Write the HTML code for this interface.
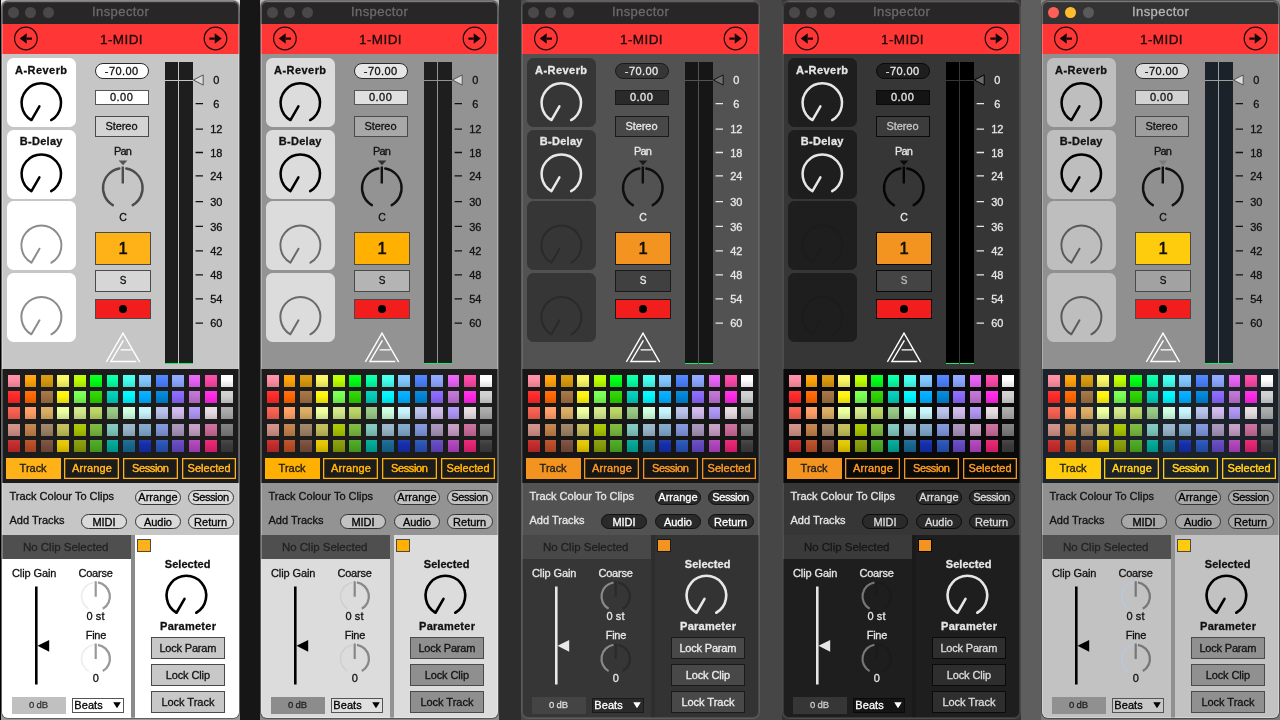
<!DOCTYPE html>
<html lang="en"><head><meta charset="utf-8"><title>Inspector</title>
<style>
html,body{margin:0;padding:0}
body{width:1280px;height:720px;overflow:hidden;background:#000;position:relative;font-family:"Liberation Sans",sans-serif}
.gap{position:absolute;top:0;height:720px}
.panel{position:absolute;top:0;width:237px;height:720px}
.edge{position:absolute;top:0;height:720px}
.win{position:absolute;left:0;top:1px;width:237px;height:716.5px;border-radius:6px;overflow:hidden;box-shadow:0 0 0 .8px rgba(0,0,0,.38);will-change:transform}
.win>*{margin-top:-1px}
.tbar{position:absolute;left:0;top:1px;width:237px;height:22.8px;z-index:1;box-shadow:inset 0 1.5px 0 #4a4848}
.light{position:absolute;z-index:2;width:10.8px;height:10.8px;border-radius:50%}
.red{position:absolute;left:0;top:23px;width:237px;height:30.8px;background:#FF3636}
.send{position:absolute;left:5px;width:69px;height:69px;border-radius:6.5px}
.t{position:absolute;width:200px;text-align:center;white-space:pre;-webkit-text-stroke:.3px}
.big{-webkit-text-stroke:.6px}
.tt{z-index:2}
.hl{position:absolute;left:0;top:1px;width:237px;height:716.5px;border-radius:6px;z-index:5}
.tb{text-shadow:0 0 .4px currentColor}
.pill{position:absolute;box-sizing:border-box;border:1px solid;border-radius:9px}
.bx{position:absolute;box-sizing:border-box;border:1px solid}
.dot{position:absolute;width:8px;height:8px;border-radius:50%;background:#000}
.meter{position:absolute;left:163px;top:62px;width:27.8px;height:302.4px}
.ov{position:absolute;left:0;top:0;pointer-events:none}
.pal{position:absolute;left:0;top:369px;width:237px;height:113.5px}
.sw{position:absolute;width:11.9px;height:12px;display:block;background-image:linear-gradient(rgba(255,255,255,.07),rgba(0,0,0,0) 40%,rgba(0,0,0,.13))}
.tab{position:absolute;top:457.8px;width:54.8px;height:21.2px;box-sizing:border-box;box-shadow:inset 0 0 0 1.3px var(--a)}
</style></head><body>
<div class="gap" style="left:0px;width:2px;background:#000"></div>
<div class="gap" style="left:239px;width:23px;background:#161616"></div>
<div class="gap" style="left:498px;width:25px;background:#2d2d2d"></div>
<div class="gap" style="left:759px;width:25px;background:#464646"></div>
<div class="gap" style="left:1020px;width:23px;background:#5e5e5e"></div>
<div class="gap" style="left:1279px;width:1px;background:#555"></div>
<div class="edge" style="left:0.7px;width:239.6px;background:linear-gradient(#e4e4e4,#9c9c9c 14px)"></div>
<div class="edge" style="left:259.8px;width:239.6px;background:linear-gradient(#b4b4b4,#8a8a8a 14px)"></div>
<div class="edge" style="left:520.7px;width:239.6px;background:linear-gradient(#4a4a4a,#464646 14px)"></div>
<div class="edge" style="left:781.5px;width:239.6px;background:linear-gradient(#383838,#333333 14px)"></div>
<div class="edge" style="left:1040.5px;width:239.6px;background:linear-gradient(#858585,#7a7a7a 14px)"></div>
<div class="panel" style="left:2px;color:#111111">
<div class="win" style="background:#c6c6c6;box-shadow:0 0 0 .9px rgba(0,0,0,.38)">
<div class="tbar" style="background:#282626"></div>
<div class="light" style="left:5.9px;top:6.9px;background:#4a4848"></div>
<div class="light" style="left:23.4px;top:6.9px;background:#4a4848"></div>
<div class="light" style="left:40.9px;top:6.9px;background:#4a4848"></div>
<div class="t tt" style="left:18.61px;top:4.45px;font-size:13px;line-height:16px;letter-spacing:0.43px;color:#6c6a6a;">Inspector</div>
<div class="red"></div>
<div class="t " style="left:19.5px;top:32.17px;font-size:13.5px;line-height:16px;letter-spacing:0.4px;color:#1a0808;">1-MIDI</div>
<div class="send" style="top:58.2px;background:#ffffff"></div>
<div class="t " style="left:-60.68px;top:63.74px;font-size:11px;line-height:13px;letter-spacing:0.44px;font-weight:bold;">A-Reverb</div>
<div class="send" style="top:130.4px;background:#ffffff"></div>
<div class="t " style="left:-60.75px;top:134.64px;font-size:11px;line-height:13px;letter-spacing:0.3px;font-weight:bold;">B-Delay</div>
<div class="send" style="top:201.2px;background:#ffffff"></div>
<div class="send" style="top:272.8px;background:#ffffff"></div>
<div class="pill" style="left:93px;top:63px;width:54px;height:16px;background:#ffffff;border-color:#2a2a2a"></div>
<div class="t " style="left:19.72px;top:65.14px;font-size:11px;line-height:13px;letter-spacing:0.44px;">-70.00</div>
<div class="bx" style="left:93px;top:90px;width:54px;height:15px;background:#ffffff;border-color:#555555"></div>
<div class="t " style="left:19.62px;top:91.04px;font-size:11px;line-height:13px;letter-spacing:0.45px;">0.00</div>
<div class="bx" style="left:93px;top:116px;width:54px;height:21px;background:#d4d4d4;border-color:#4a4a4a"></div>
<div class="t " style="left:19.46px;top:120.44px;font-size:11px;line-height:13px;letter-spacing:-0.08px;color:#111111;">Stereo</div>
<div class="t " style="left:20.61px;top:144.54px;font-size:11px;line-height:13px;letter-spacing:-0.79px;">Pan</div>
<div class="t " style="left:21px;top:211.31px;font-size:10.5px;line-height:13px;">C</div>
<div class="bx" style="left:93.2px;top:232.2px;width:55.8px;height:32.6px;background:#FFB118;border-color:#4a4a4a"></div>
<div class="t big" style="left:21px;top:237.73px;font-size:16.5px;line-height:20px;color:#111;">1</div>
<div class="bx" style="left:93.2px;top:270.2px;width:55.8px;height:21.4px;background:#d6d6d6;border-color:#4a4a4a"></div>
<div class="t " style="left:21px;top:275.38px;font-size:10px;line-height:12px;color:#111111;">S</div>
<div class="bx" style="left:93.2px;top:298.7px;width:55.8px;height:20.8px;background:#F21D1D;border-color:#4a4a4a"></div>
<div class="dot" style="left:117px;top:305px"></div>
<div class="meter" style="background:#1e1e1e"></div>
<div style="position:absolute;left:176px;top:62px;width:1.1px;height:302.4px;background:#c6c6c6"></div>
<div style="position:absolute;left:163px;top:79.5px;width:28px;height:1.1px;background:#c6c6c6"></div>
<div style="position:absolute;left:163px;top:362.8px;width:27.8px;height:1.6px;background:#14f06a"></div>
<div style="position:absolute;left:176px;top:362.8px;width:1.1px;height:1.6px;background:#c6c6c6"></div>
<div class="t " style="left:114.3px;top:74.29px;font-size:11px;line-height:13px;">0</div>
<div class="t " style="left:114.3px;top:97.84px;font-size:11px;line-height:13px;">6</div>
<div class="t " style="left:114.3px;top:123.49px;font-size:11px;line-height:13px;">12</div>
<div class="t " style="left:114.3px;top:146.79px;font-size:11px;line-height:13px;">18</div>
<div class="t " style="left:114.3px;top:170.09px;font-size:11px;line-height:13px;">24</div>
<div class="t " style="left:114.3px;top:195.89px;font-size:11px;line-height:13px;">30</div>
<div class="t " style="left:114.3px;top:220.59px;font-size:11px;line-height:13px;">36</div>
<div class="t " style="left:114.3px;top:245.09px;font-size:11px;line-height:13px;">42</div>
<div class="t " style="left:114.3px;top:269.09px;font-size:11px;line-height:13px;">48</div>
<div class="t " style="left:114.3px;top:293.09px;font-size:11px;line-height:13px;">54</div>
<div class="t " style="left:114.3px;top:317.39px;font-size:11px;line-height:13px;">60</div>
<svg class="ov" width="237" height="720" viewBox="0 0 237 720">
<path d="M29.45 120.06A19.7 19.7 0 1 1 49.15 120.06M37.4 106.29L29.45 120.06" fill="none" stroke="#000000" stroke-width="2.5" stroke-linecap="round"/>
<path d="M29.45 191.16A19.7 19.7 0 1 1 49.15 191.16M37.4 177.39L29.45 191.16" fill="none" stroke="#000000" stroke-width="2.5" stroke-linecap="round"/>
<path d="M29.4 262.72A20 20 0 1 1 49.4 262.72M37.5 248.69L29.4 262.72" fill="none" stroke="#8c8c8c" stroke-width="2.0" stroke-linecap="round"/>
<path d="M29.4 334.32A20 20 0 1 1 49.4 334.32M37.5 320.29L29.4 334.32" fill="none" stroke="#8c8c8c" stroke-width="2.0" stroke-linecap="round"/>
<path d="M193.6 103.55h7.4M193.6 129.2h7.4M193.6 152.5h7.4M193.6 175.8h7.4M193.6 201.6h7.4M193.6 226.3h7.4M193.6 250.8h7.4M193.6 274.8h7.4M193.6 298.8h7.4M193.6 323.1h7.4" stroke="#111111" stroke-width="1.3"/>
<path d="M110.9 205.15A19.8 19.8 0 0 1 117.36 168.5M124.24 168.5A19.8 19.8 0 0 1 130.7 205.15" fill="none" stroke="#4c4c4c" stroke-width="2.4" stroke-linecap="round"/>
<path d="M120.8 166.5L120.8 183.5" stroke="#4c4c4c" stroke-width="2.4" stroke-linecap="butt"/>
<path d="M116.6 160.6h8.8l-4.4 4.6z" fill="#555555"/>
<path d="M191.4 80L201.2 74.9V85.1z" fill="#dcdcdc" stroke="#555555" stroke-width="1"/>
<path d="M104.4 361.9L121 333.2L137.7 362.2M121.4 340.3L108.9 361.5H134.3M118.6 349.9H129.5" fill="none" stroke="#ffffff" stroke-width="1.4" stroke-linejoin="miter"/>
<circle cx="23.9" cy="38.5" r="11.3" fill="none" stroke="#1a0a0a" stroke-width="1.2"/>
<path d="M17.7 38.5L24.7 33.2V43.8z" fill="#140808"/>
<path d="M24.7 38.6H30" stroke="#140808" stroke-width="2.3"/>
<circle cx="213.5" cy="38.5" r="11.3" fill="none" stroke="#1a0a0a" stroke-width="1.2"/>
<path d="M219.7 38.5L212.7 33.2V43.8z" fill="#140808"/>
<path d="M212.7 38.6H207.4" stroke="#140808" stroke-width="2.3"/>
</svg>
<div class="pal" style="background:#1c1c1c"></div>
<i class="sw" style="left:6.2px;top:374.5px;background-color:#ff8da2"></i>
<i class="sw" style="left:22.6px;top:374.5px;background-color:#ffa20b"></i>
<i class="sw" style="left:39px;top:374.5px;background-color:#d7990d"></i>
<i class="sw" style="left:55.4px;top:374.5px;background-color:#faf764"></i>
<i class="sw" style="left:71.8px;top:374.5px;background-color:#bcff00"></i>
<i class="sw" style="left:88.2px;top:374.5px;background-color:#00ff16"></i>
<i class="sw" style="left:104.6px;top:374.5px;background-color:#06ffa5"></i>
<i class="sw" style="left:121px;top:374.5px;background-color:#43ffee"></i>
<i class="sw" style="left:137.4px;top:374.5px;background-color:#81c7ff"></i>
<i class="sw" style="left:153.8px;top:374.5px;background-color:#4b80fa"></i>
<i class="sw" style="left:170.2px;top:374.5px;background-color:#8da6ff"></i>
<i class="sw" style="left:186.6px;top:374.5px;background-color:#e662f4"></i>
<i class="sw" style="left:203px;top:374.5px;background-color:#fa47a5"></i>
<i class="sw" style="left:219.4px;top:374.5px;background-color:#ffffff"></i>
<i class="sw" style="left:6.2px;top:390.9px;background-color:#ff2929"></i>
<i class="sw" style="left:22.6px;top:390.9px;background-color:#ff6600"></i>
<i class="sw" style="left:39px;top:390.9px;background-color:#a07041"></i>
<i class="sw" style="left:55.4px;top:390.9px;background-color:#fff40e"></i>
<i class="sw" style="left:71.8px;top:390.9px;background-color:#78ff51"></i>
<i class="sw" style="left:88.2px;top:390.9px;background-color:#2dd100"></i>
<i class="sw" style="left:104.6px;top:390.9px;background-color:#00ccb8"></i>
<i class="sw" style="left:121px;top:390.9px;background-color:#00f6ff"></i>
<i class="sw" style="left:137.4px;top:390.9px;background-color:#00acff"></i>
<i class="sw" style="left:153.8px;top:390.9px;background-color:#0084d5"></i>
<i class="sw" style="left:170.2px;top:390.9px;background-color:#8967fa"></i>
<i class="sw" style="left:186.6px;top:390.9px;background-color:#be71d1"></i>
<i class="sw" style="left:203px;top:390.9px;background-color:#ff28e5"></i>
<i class="sw" style="left:219.4px;top:390.9px;background-color:#d0d0d0"></i>
<i class="sw" style="left:6.2px;top:407.3px;background-color:#f55f4f"></i>
<i class="sw" style="left:22.6px;top:407.3px;background-color:#ff9e65"></i>
<i class="sw" style="left:39px;top:407.3px;background-color:#daac63"></i>
<i class="sw" style="left:55.4px;top:407.3px;background-color:#ecff9f"></i>
<i class="sw" style="left:71.8px;top:407.3px;background-color:#d1e78a"></i>
<i class="sw" style="left:88.2px;top:407.3px;background-color:#b9d464"></i>
<i class="sw" style="left:104.6px;top:407.3px;background-color:#96c885"></i>
<i class="sw" style="left:121px;top:407.3px;background-color:#ceffde"></i>
<i class="sw" style="left:137.4px;top:407.3px;background-color:#c7f3fc"></i>
<i class="sw" style="left:153.8px;top:407.3px;background-color:#b7c1ea"></i>
<i class="sw" style="left:170.2px;top:407.3px;background-color:#cfb9eb"></i>
<i class="sw" style="left:186.6px;top:407.3px;background-color:#af95f3"></i>
<i class="sw" style="left:203px;top:407.3px;background-color:#e6dbe1"></i>
<i class="sw" style="left:219.4px;top:407.3px;background-color:#a9a9a9"></i>
<i class="sw" style="left:6.2px;top:423.7px;background-color:#ce8f86"></i>
<i class="sw" style="left:22.6px;top:423.7px;background-color:#c0804a"></i>
<i class="sw" style="left:39px;top:423.7px;background-color:#9d8264"></i>
<i class="sw" style="left:55.4px;top:423.7px;background-color:#c2bc59"></i>
<i class="sw" style="left:71.8px;top:423.7px;background-color:#a7c400"></i>
<i class="sw" style="left:88.2px;top:423.7px;background-color:#78b63d"></i>
<i class="sw" style="left:104.6px;top:423.7px;background-color:#7fc6bc"></i>
<i class="sw" style="left:121px;top:423.7px;background-color:#97b4c9"></i>
<i class="sw" style="left:137.4px;top:423.7px;background-color:#7fa6ca"></i>
<i class="sw" style="left:153.8px;top:423.7px;background-color:#7f93d8"></i>
<i class="sw" style="left:170.2px;top:423.7px;background-color:#a793ba"></i>
<i class="sw" style="left:186.6px;top:423.7px;background-color:#c39cc2"></i>
<i class="sw" style="left:203px;top:423.7px;background-color:#c76b98"></i>
<i class="sw" style="left:219.4px;top:423.7px;background-color:#7b7b7b"></i>
<i class="sw" style="left:6.2px;top:440.1px;background-color:#c22b2b"></i>
<i class="sw" style="left:22.6px;top:440.1px;background-color:#b74c25"></i>
<i class="sw" style="left:39px;top:440.1px;background-color:#784d3c"></i>
<i class="sw" style="left:55.4px;top:440.1px;background-color:#e4c600"></i>
<i class="sw" style="left:71.8px;top:440.1px;background-color:#859a09"></i>
<i class="sw" style="left:88.2px;top:440.1px;background-color:#4aa721"></i>
<i class="sw" style="left:104.6px;top:440.1px;background-color:#00a695"></i>
<i class="sw" style="left:121px;top:440.1px;background-color:#18668f"></i>
<i class="sw" style="left:137.4px;top:440.1px;background-color:#142eab"></i>
<i class="sw" style="left:153.8px;top:440.1px;background-color:#2852b4"></i>
<i class="sw" style="left:170.2px;top:440.1px;background-color:#6347bf"></i>
<i class="sw" style="left:186.6px;top:440.1px;background-color:#ae43ba"></i>
<i class="sw" style="left:203px;top:440.1px;background-color:#e32270"></i>
<i class="sw" style="left:219.4px;top:440.1px;background-color:#3c3c3c"></i>
<div class="tab" style="left:3.8px;background:#FFB118;border-color:#FFB118"></div>
<div class="t " style="left:-68.91px;top:461.54px;font-size:11px;line-height:13px;letter-spacing:-0.02px;color:#1a1a1a;">Track</div>
<div class="tab" style="left:62.4px;border-color:#FFB118;--a:#FFB118"></div>
<div class="t tb" style="left:-10.03px;top:461.54px;font-size:11px;line-height:13px;letter-spacing:0.14px;color:#FFB118;">Arrange</div>
<div class="tab" style="left:121px;border-color:#FFB118;--a:#FFB118"></div>
<div class="t tb" style="left:48.32px;top:461.54px;font-size:11px;line-height:13px;letter-spacing:-0.36px;color:#FFB118;">Session</div>
<div class="tab" style="left:179.6px;border-color:#FFB118;--a:#FFB118"></div>
<div class="t tb" style="left:107.11px;top:461.54px;font-size:11px;line-height:13px;letter-spacing:0.03px;color:#FFB118;">Selected</div>
<div class="t " style="left:-40.25px;top:489.94px;font-size:11px;line-height:13px;letter-spacing:0px;">Track Colour To Clips</div>
<div class="t " style="left:-65px;top:514.34px;font-size:11px;line-height:13px;letter-spacing:0px;">Add Tracks</div>
<div class="pill" style="left:133px;top:489.5px;width:46px;height:15px;background:#dadada;border-color:#333333"></div>
<div class="t " style="left:56.01px;top:491.04px;font-size:11px;line-height:13px;letter-spacing:0.03px;color:#000000;">Arrange</div>
<div class="pill" style="left:185.6px;top:489.5px;width:46px;height:15px;background:#dadada;border-color:#333333"></div>
<div class="t " style="left:108.41px;top:491.04px;font-size:11px;line-height:13px;letter-spacing:-0.39px;color:#000000;">Session</div>
<div class="pill" style="left:79px;top:514px;width:46px;height:15px;background:#dadada;border-color:#333333"></div>
<div class="t " style="left:1.96px;top:515.54px;font-size:11px;line-height:13px;letter-spacing:-0.07px;color:#000000;">MIDI</div>
<div class="pill" style="left:133px;top:514px;width:46px;height:15px;background:#dadada;border-color:#333333"></div>
<div class="t " style="left:55.98px;top:515.54px;font-size:11px;line-height:13px;letter-spacing:-0.03px;color:#000000;">Audio</div>
<div class="pill" style="left:185.6px;top:514px;width:46px;height:15px;background:#dadada;border-color:#333333"></div>
<div class="t " style="left:108.6px;top:515.54px;font-size:11px;line-height:13px;letter-spacing:0px;color:#000000;">Return</div>
<div style="position:absolute;left:0;top:535px;width:129px;height:24px;background:#4f4f4f"></div>
<div class="t " style="left:-36.31px;top:540.47px;font-size:11.5px;line-height:14px;letter-spacing:-0.01px;color:#222222;">No Clip Selected</div>
<div style="position:absolute;left:0;top:559px;width:129px;height:159px;background:#ffffff;border-bottom-left-radius:6px"></div>
<div style="position:absolute;left:129px;top:535px;width:3.6px;height:183px;background:#8a8a8a"></div>
<div style="position:absolute;left:132.6px;top:535px;width:104.4px;height:183px;background:#ffffff;border-bottom-right-radius:6px"></div>
<div class="t " style="left:-67.85px;top:567.14px;font-size:11px;line-height:13px;letter-spacing:-0.09px;">Clip Gain</div>
<div class="t " style="left:-6.4px;top:567.14px;font-size:11px;line-height:13px;letter-spacing:-0.19px;">Coarse</div>
<div class="t " style="left:-6.45px;top:610.14px;font-size:11px;line-height:13px;letter-spacing:0.09px;">0 st</div>
<div class="t " style="left:-6.15px;top:628.94px;font-size:11px;line-height:13px;letter-spacing:-0.3px;">Fine</div>
<div class="t " style="left:-6.2px;top:672.34px;font-size:11px;line-height:13px;">0</div>
<div style="position:absolute;left:10px;top:696.8px;width:53.5px;height:17px;background:#c0c0c0"></div>
<div class="t " style="left:-63.59px;top:699.36px;font-size:9.5px;line-height:11px;letter-spacing:-0.18px;color:#333333;">0 dB</div>
<div class="bx" style="left:69.5px;top:698.2px;width:52px;height:14.6px;background:#ffffff;border-color:#555555"></div>
<div class="t " style="left:-13.45px;top:699.04px;font-size:11px;line-height:13px;letter-spacing:0.09px;color:#000000;">Beats</div>
<div class="bx" style="left:135.2px;top:538.8px;width:13.8px;height:13.6px;background:#FFB118;border-color:#4a4a4a"></div>
<div class="t " style="left:85.63px;top:557.54px;font-size:11px;line-height:13px;letter-spacing:0.06px;font-weight:bold;">Selected</div>
<div class="t " style="left:86.13px;top:619.74px;font-size:11px;line-height:13px;letter-spacing:0.26px;font-weight:bold;">Parameter</div>
<div class="bx" style="left:149px;top:637px;width:74px;height:21.8px;background:#c8c8c8;border-color:#4a4a4a"></div>
<div class="t " style="left:85.81px;top:641.84px;font-size:11px;line-height:13px;letter-spacing:-0.19px;color:#111111;">Lock Param</div>
<div class="bx" style="left:149px;top:664px;width:74px;height:21.8px;background:#c8c8c8;border-color:#4a4a4a"></div>
<div class="t " style="left:85.85px;top:668.84px;font-size:11px;line-height:13px;letter-spacing:-0.11px;color:#111111;">Lock Clip</div>
<div class="bx" style="left:149px;top:691px;width:74px;height:21.8px;background:#c8c8c8;border-color:#4a4a4a"></div>
<div class="t " style="left:85.89px;top:695.84px;font-size:11px;line-height:13px;letter-spacing:-0.02px;color:#111111;">Lock Track</div>
<svg class="ov" width="237" height="720" viewBox="0 0 237 720">
<path d="M174.5 612.75A19.8 19.8 0 1 1 194.3 612.75M182.5 598.89L174.5 612.75" fill="none" stroke="#000000" stroke-width="2.6" stroke-linecap="round"/>
<path d="M35.5 645.8L47.2 640V651.7z" fill="#000000"/>
<path d="M111.2 702.3h7.6l-3.8 6z" fill="#000000"/>
<path d="M86.6 608.8A14.2 14.2 0 0 1 91.48 582.47" fill="none" stroke="#ececec" stroke-width="1.6"/>
<path d="M95.92 582.47A14.2 14.2 0 0 1 100.8 608.8" fill="none" stroke="#999999" stroke-width="2.3"/>
<path d="M93.7 581.2V596.8" stroke="#999999" stroke-width="2.2"/>
<path d="M86.6 671.1A14.2 14.2 0 0 1 91.48 644.77" fill="none" stroke="#ececec" stroke-width="1.6"/>
<path d="M95.92 644.77A14.2 14.2 0 0 1 100.8 671.1" fill="none" stroke="#999999" stroke-width="2.3"/>
<path d="M93.7 643.5V659.1" stroke="#999999" stroke-width="2.2"/>
<path d="M34.3 586.5V684.6" stroke="#000000" stroke-width="2.6"/>
</svg>
<div class="hl" style="box-shadow:inset 0 0 0 1px rgba(255,255,255,0.28)"></div>
</div>
</div>
<div class="panel" style="left:261.1px;color:#111111">
<div class="win" style="background:#939393;box-shadow:0 0 0 .9px rgba(0,0,0,.38)">
<div class="tbar" style="background:#282626"></div>
<div class="light" style="left:5.9px;top:6.9px;background:#4a4848"></div>
<div class="light" style="left:23.4px;top:6.9px;background:#4a4848"></div>
<div class="light" style="left:40.9px;top:6.9px;background:#4a4848"></div>
<div class="t tt" style="left:18.61px;top:4.45px;font-size:13px;line-height:16px;letter-spacing:0.43px;color:#6c6a6a;">Inspector</div>
<div class="red"></div>
<div class="t " style="left:19.5px;top:32.17px;font-size:13.5px;line-height:16px;letter-spacing:0.4px;color:#1a0808;">1-MIDI</div>
<div class="send" style="top:58.2px;background:#dcdcdc"></div>
<div class="t " style="left:-60.68px;top:63.74px;font-size:11px;line-height:13px;letter-spacing:0.44px;font-weight:bold;">A-Reverb</div>
<div class="send" style="top:130.4px;background:#dcdcdc"></div>
<div class="t " style="left:-60.75px;top:134.64px;font-size:11px;line-height:13px;letter-spacing:0.3px;font-weight:bold;">B-Delay</div>
<div class="send" style="top:201.2px;background:#dcdcdc"></div>
<div class="send" style="top:272.8px;background:#dcdcdc"></div>
<div class="pill" style="left:93px;top:63px;width:54px;height:16px;background:#e6e6e6;border-color:#2a2a2a"></div>
<div class="t " style="left:19.72px;top:65.14px;font-size:11px;line-height:13px;letter-spacing:0.44px;">-70.00</div>
<div class="bx" style="left:93px;top:90px;width:54px;height:15px;background:#e0e0e0;border-color:#555555"></div>
<div class="t " style="left:19.62px;top:91.04px;font-size:11px;line-height:13px;letter-spacing:0.45px;">0.00</div>
<div class="bx" style="left:93px;top:116px;width:54px;height:21px;background:#a8a8a8;border-color:#4a4a4a"></div>
<div class="t " style="left:19.46px;top:120.44px;font-size:11px;line-height:13px;letter-spacing:-0.08px;color:#111111;">Stereo</div>
<div class="t " style="left:20.61px;top:144.54px;font-size:11px;line-height:13px;letter-spacing:-0.79px;">Pan</div>
<div class="t " style="left:21px;top:211.31px;font-size:10.5px;line-height:13px;">C</div>
<div class="bx" style="left:93.2px;top:232.2px;width:55.8px;height:32.6px;background:#FFB000;border-color:#4a4a4a"></div>
<div class="t big" style="left:21px;top:237.73px;font-size:16.5px;line-height:20px;color:#111;">1</div>
<div class="bx" style="left:93.2px;top:270.2px;width:55.8px;height:21.4px;background:#b4b4b4;border-color:#4a4a4a"></div>
<div class="t " style="left:21px;top:275.38px;font-size:10px;line-height:12px;color:#111111;">S</div>
<div class="bx" style="left:93.2px;top:298.7px;width:55.8px;height:20.8px;background:#F21D1D;border-color:#4a4a4a"></div>
<div class="dot" style="left:117px;top:305px"></div>
<div class="meter" style="background:#1e1e1e"></div>
<div style="position:absolute;left:176px;top:62px;width:1.1px;height:302.4px;background:#939393"></div>
<div style="position:absolute;left:163px;top:79.5px;width:28px;height:1.1px;background:#939393"></div>
<div style="position:absolute;left:163px;top:362.8px;width:27.8px;height:1.6px;background:#14f06a"></div>
<div style="position:absolute;left:176px;top:362.8px;width:1.1px;height:1.6px;background:#939393"></div>
<div class="t " style="left:114.3px;top:74.29px;font-size:11px;line-height:13px;">0</div>
<div class="t " style="left:114.3px;top:97.84px;font-size:11px;line-height:13px;">6</div>
<div class="t " style="left:114.3px;top:123.49px;font-size:11px;line-height:13px;">12</div>
<div class="t " style="left:114.3px;top:146.79px;font-size:11px;line-height:13px;">18</div>
<div class="t " style="left:114.3px;top:170.09px;font-size:11px;line-height:13px;">24</div>
<div class="t " style="left:114.3px;top:195.89px;font-size:11px;line-height:13px;">30</div>
<div class="t " style="left:114.3px;top:220.59px;font-size:11px;line-height:13px;">36</div>
<div class="t " style="left:114.3px;top:245.09px;font-size:11px;line-height:13px;">42</div>
<div class="t " style="left:114.3px;top:269.09px;font-size:11px;line-height:13px;">48</div>
<div class="t " style="left:114.3px;top:293.09px;font-size:11px;line-height:13px;">54</div>
<div class="t " style="left:114.3px;top:317.39px;font-size:11px;line-height:13px;">60</div>
<svg class="ov" width="237" height="720" viewBox="0 0 237 720">
<path d="M29.45 120.06A19.7 19.7 0 1 1 49.15 120.06M37.4 106.29L29.45 120.06" fill="none" stroke="#000000" stroke-width="2.5" stroke-linecap="round"/>
<path d="M29.45 191.16A19.7 19.7 0 1 1 49.15 191.16M37.4 177.39L29.45 191.16" fill="none" stroke="#000000" stroke-width="2.5" stroke-linecap="round"/>
<path d="M29.4 262.72A20 20 0 1 1 49.4 262.72M37.5 248.69L29.4 262.72" fill="none" stroke="#6a6a6a" stroke-width="2.0" stroke-linecap="round"/>
<path d="M29.4 334.32A20 20 0 1 1 49.4 334.32M37.5 320.29L29.4 334.32" fill="none" stroke="#6a6a6a" stroke-width="2.0" stroke-linecap="round"/>
<path d="M193.6 103.55h7.4M193.6 129.2h7.4M193.6 152.5h7.4M193.6 175.8h7.4M193.6 201.6h7.4M193.6 226.3h7.4M193.6 250.8h7.4M193.6 274.8h7.4M193.6 298.8h7.4M193.6 323.1h7.4" stroke="#111111" stroke-width="1.3"/>
<path d="M110.9 205.15A19.8 19.8 0 0 1 117.36 168.5M124.24 168.5A19.8 19.8 0 0 1 130.7 205.15" fill="none" stroke="#111111" stroke-width="2.4" stroke-linecap="round"/>
<path d="M120.8 166.5L120.8 183.5" stroke="#111111" stroke-width="2.4" stroke-linecap="butt"/>
<path d="M116.6 160.6h8.8l-4.4 4.6z" fill="#333333"/>
<path d="M191.4 80L201.2 74.9V85.1z" fill="#dcdcdc" stroke="#555555" stroke-width="1"/>
<path d="M104.4 361.9L121 333.2L137.7 362.2M121.4 340.3L108.9 361.5H134.3M118.6 349.9H129.5" fill="none" stroke="#ffffff" stroke-width="1.4" stroke-linejoin="miter"/>
<circle cx="23.9" cy="38.5" r="11.3" fill="none" stroke="#1a0a0a" stroke-width="1.2"/>
<path d="M17.7 38.5L24.7 33.2V43.8z" fill="#140808"/>
<path d="M24.7 38.6H30" stroke="#140808" stroke-width="2.3"/>
<circle cx="213.5" cy="38.5" r="11.3" fill="none" stroke="#1a0a0a" stroke-width="1.2"/>
<path d="M219.7 38.5L212.7 33.2V43.8z" fill="#140808"/>
<path d="M212.7 38.6H207.4" stroke="#140808" stroke-width="2.3"/>
</svg>
<div class="pal" style="background:#1c1c1c"></div>
<i class="sw" style="left:6.2px;top:374.5px;background-color:#ff8da2"></i>
<i class="sw" style="left:22.6px;top:374.5px;background-color:#ffa20b"></i>
<i class="sw" style="left:39px;top:374.5px;background-color:#d7990d"></i>
<i class="sw" style="left:55.4px;top:374.5px;background-color:#faf764"></i>
<i class="sw" style="left:71.8px;top:374.5px;background-color:#bcff00"></i>
<i class="sw" style="left:88.2px;top:374.5px;background-color:#00ff16"></i>
<i class="sw" style="left:104.6px;top:374.5px;background-color:#06ffa5"></i>
<i class="sw" style="left:121px;top:374.5px;background-color:#43ffee"></i>
<i class="sw" style="left:137.4px;top:374.5px;background-color:#81c7ff"></i>
<i class="sw" style="left:153.8px;top:374.5px;background-color:#4b80fa"></i>
<i class="sw" style="left:170.2px;top:374.5px;background-color:#8da6ff"></i>
<i class="sw" style="left:186.6px;top:374.5px;background-color:#e662f4"></i>
<i class="sw" style="left:203px;top:374.5px;background-color:#fa47a5"></i>
<i class="sw" style="left:219.4px;top:374.5px;background-color:#ffffff"></i>
<i class="sw" style="left:6.2px;top:390.9px;background-color:#ff2929"></i>
<i class="sw" style="left:22.6px;top:390.9px;background-color:#ff6600"></i>
<i class="sw" style="left:39px;top:390.9px;background-color:#a07041"></i>
<i class="sw" style="left:55.4px;top:390.9px;background-color:#fff40e"></i>
<i class="sw" style="left:71.8px;top:390.9px;background-color:#78ff51"></i>
<i class="sw" style="left:88.2px;top:390.9px;background-color:#2dd100"></i>
<i class="sw" style="left:104.6px;top:390.9px;background-color:#00ccb8"></i>
<i class="sw" style="left:121px;top:390.9px;background-color:#00f6ff"></i>
<i class="sw" style="left:137.4px;top:390.9px;background-color:#00acff"></i>
<i class="sw" style="left:153.8px;top:390.9px;background-color:#0084d5"></i>
<i class="sw" style="left:170.2px;top:390.9px;background-color:#8967fa"></i>
<i class="sw" style="left:186.6px;top:390.9px;background-color:#be71d1"></i>
<i class="sw" style="left:203px;top:390.9px;background-color:#ff28e5"></i>
<i class="sw" style="left:219.4px;top:390.9px;background-color:#d0d0d0"></i>
<i class="sw" style="left:6.2px;top:407.3px;background-color:#f55f4f"></i>
<i class="sw" style="left:22.6px;top:407.3px;background-color:#ff9e65"></i>
<i class="sw" style="left:39px;top:407.3px;background-color:#daac63"></i>
<i class="sw" style="left:55.4px;top:407.3px;background-color:#ecff9f"></i>
<i class="sw" style="left:71.8px;top:407.3px;background-color:#d1e78a"></i>
<i class="sw" style="left:88.2px;top:407.3px;background-color:#b9d464"></i>
<i class="sw" style="left:104.6px;top:407.3px;background-color:#96c885"></i>
<i class="sw" style="left:121px;top:407.3px;background-color:#ceffde"></i>
<i class="sw" style="left:137.4px;top:407.3px;background-color:#c7f3fc"></i>
<i class="sw" style="left:153.8px;top:407.3px;background-color:#b7c1ea"></i>
<i class="sw" style="left:170.2px;top:407.3px;background-color:#cfb9eb"></i>
<i class="sw" style="left:186.6px;top:407.3px;background-color:#af95f3"></i>
<i class="sw" style="left:203px;top:407.3px;background-color:#e6dbe1"></i>
<i class="sw" style="left:219.4px;top:407.3px;background-color:#a9a9a9"></i>
<i class="sw" style="left:6.2px;top:423.7px;background-color:#ce8f86"></i>
<i class="sw" style="left:22.6px;top:423.7px;background-color:#c0804a"></i>
<i class="sw" style="left:39px;top:423.7px;background-color:#9d8264"></i>
<i class="sw" style="left:55.4px;top:423.7px;background-color:#c2bc59"></i>
<i class="sw" style="left:71.8px;top:423.7px;background-color:#a7c400"></i>
<i class="sw" style="left:88.2px;top:423.7px;background-color:#78b63d"></i>
<i class="sw" style="left:104.6px;top:423.7px;background-color:#7fc6bc"></i>
<i class="sw" style="left:121px;top:423.7px;background-color:#97b4c9"></i>
<i class="sw" style="left:137.4px;top:423.7px;background-color:#7fa6ca"></i>
<i class="sw" style="left:153.8px;top:423.7px;background-color:#7f93d8"></i>
<i class="sw" style="left:170.2px;top:423.7px;background-color:#a793ba"></i>
<i class="sw" style="left:186.6px;top:423.7px;background-color:#c39cc2"></i>
<i class="sw" style="left:203px;top:423.7px;background-color:#c76b98"></i>
<i class="sw" style="left:219.4px;top:423.7px;background-color:#7b7b7b"></i>
<i class="sw" style="left:6.2px;top:440.1px;background-color:#c22b2b"></i>
<i class="sw" style="left:22.6px;top:440.1px;background-color:#b74c25"></i>
<i class="sw" style="left:39px;top:440.1px;background-color:#784d3c"></i>
<i class="sw" style="left:55.4px;top:440.1px;background-color:#e4c600"></i>
<i class="sw" style="left:71.8px;top:440.1px;background-color:#859a09"></i>
<i class="sw" style="left:88.2px;top:440.1px;background-color:#4aa721"></i>
<i class="sw" style="left:104.6px;top:440.1px;background-color:#00a695"></i>
<i class="sw" style="left:121px;top:440.1px;background-color:#18668f"></i>
<i class="sw" style="left:137.4px;top:440.1px;background-color:#142eab"></i>
<i class="sw" style="left:153.8px;top:440.1px;background-color:#2852b4"></i>
<i class="sw" style="left:170.2px;top:440.1px;background-color:#6347bf"></i>
<i class="sw" style="left:186.6px;top:440.1px;background-color:#ae43ba"></i>
<i class="sw" style="left:203px;top:440.1px;background-color:#e32270"></i>
<i class="sw" style="left:219.4px;top:440.1px;background-color:#3c3c3c"></i>
<div class="tab" style="left:3.8px;background:#FFB000;border-color:#FFB000"></div>
<div class="t " style="left:-68.91px;top:461.54px;font-size:11px;line-height:13px;letter-spacing:-0.02px;color:#1a1a1a;">Track</div>
<div class="tab" style="left:62.4px;border-color:#FFB000;--a:#FFB000"></div>
<div class="t tb" style="left:-10.03px;top:461.54px;font-size:11px;line-height:13px;letter-spacing:0.14px;color:#FFB000;">Arrange</div>
<div class="tab" style="left:121px;border-color:#FFB000;--a:#FFB000"></div>
<div class="t tb" style="left:48.32px;top:461.54px;font-size:11px;line-height:13px;letter-spacing:-0.36px;color:#FFB000;">Session</div>
<div class="tab" style="left:179.6px;border-color:#FFB000;--a:#FFB000"></div>
<div class="t tb" style="left:107.11px;top:461.54px;font-size:11px;line-height:13px;letter-spacing:0.03px;color:#FFB000;">Selected</div>
<div class="t " style="left:-40.25px;top:489.94px;font-size:11px;line-height:13px;letter-spacing:0px;">Track Colour To Clips</div>
<div class="t " style="left:-65px;top:514.34px;font-size:11px;line-height:13px;letter-spacing:0px;">Add Tracks</div>
<div class="pill" style="left:133px;top:489.5px;width:46px;height:15px;background:#c2c2c2;border-color:#333333"></div>
<div class="t " style="left:56.01px;top:491.04px;font-size:11px;line-height:13px;letter-spacing:0.03px;color:#000000;">Arrange</div>
<div class="pill" style="left:185.6px;top:489.5px;width:46px;height:15px;background:#c2c2c2;border-color:#333333"></div>
<div class="t " style="left:108.41px;top:491.04px;font-size:11px;line-height:13px;letter-spacing:-0.39px;color:#000000;">Session</div>
<div class="pill" style="left:79px;top:514px;width:46px;height:15px;background:#c2c2c2;border-color:#333333"></div>
<div class="t " style="left:1.96px;top:515.54px;font-size:11px;line-height:13px;letter-spacing:-0.07px;color:#000000;">MIDI</div>
<div class="pill" style="left:133px;top:514px;width:46px;height:15px;background:#c2c2c2;border-color:#333333"></div>
<div class="t " style="left:55.98px;top:515.54px;font-size:11px;line-height:13px;letter-spacing:-0.03px;color:#000000;">Audio</div>
<div class="pill" style="left:185.6px;top:514px;width:46px;height:15px;background:#c2c2c2;border-color:#333333"></div>
<div class="t " style="left:108.6px;top:515.54px;font-size:11px;line-height:13px;letter-spacing:0px;color:#000000;">Return</div>
<div style="position:absolute;left:0;top:535px;width:129px;height:24px;background:#4f4f4f"></div>
<div class="t " style="left:-36.31px;top:540.47px;font-size:11.5px;line-height:14px;letter-spacing:-0.01px;color:#222222;">No Clip Selected</div>
<div style="position:absolute;left:0;top:559px;width:129px;height:159px;background:#dcdcdc;border-bottom-left-radius:6px"></div>
<div style="position:absolute;left:129px;top:535px;width:3.6px;height:183px;background:#939393"></div>
<div style="position:absolute;left:132.6px;top:535px;width:104.4px;height:183px;background:#dcdcdc;border-bottom-right-radius:6px"></div>
<div class="t " style="left:-67.85px;top:567.14px;font-size:11px;line-height:13px;letter-spacing:-0.09px;">Clip Gain</div>
<div class="t " style="left:-6.4px;top:567.14px;font-size:11px;line-height:13px;letter-spacing:-0.19px;">Coarse</div>
<div class="t " style="left:-6.45px;top:610.14px;font-size:11px;line-height:13px;letter-spacing:0.09px;">0 st</div>
<div class="t " style="left:-6.15px;top:628.94px;font-size:11px;line-height:13px;letter-spacing:-0.3px;">Fine</div>
<div class="t " style="left:-6.2px;top:672.34px;font-size:11px;line-height:13px;">0</div>
<div style="position:absolute;left:10px;top:696.8px;width:53.5px;height:17px;background:#8c8c8c"></div>
<div class="t " style="left:-63.59px;top:699.36px;font-size:9.5px;line-height:11px;letter-spacing:-0.18px;color:#222222;">0 dB</div>
<div class="bx" style="left:69.5px;top:698.2px;width:52px;height:14.6px;background:#e0e0e0;border-color:#555555"></div>
<div class="t " style="left:-13.45px;top:699.04px;font-size:11px;line-height:13px;letter-spacing:0.09px;color:#000000;">Beats</div>
<div class="bx" style="left:135.2px;top:538.8px;width:13.8px;height:13.6px;background:#FFB000;border-color:#4a4a4a"></div>
<div class="t " style="left:85.63px;top:557.54px;font-size:11px;line-height:13px;letter-spacing:0.06px;font-weight:bold;">Selected</div>
<div class="t " style="left:86.13px;top:619.74px;font-size:11px;line-height:13px;letter-spacing:0.26px;font-weight:bold;">Parameter</div>
<div class="bx" style="left:149px;top:637px;width:74px;height:21.8px;background:#8f8f8f;border-color:#4a4a4a"></div>
<div class="t " style="left:85.81px;top:641.84px;font-size:11px;line-height:13px;letter-spacing:-0.19px;color:#111111;">Lock Param</div>
<div class="bx" style="left:149px;top:664px;width:74px;height:21.8px;background:#8f8f8f;border-color:#4a4a4a"></div>
<div class="t " style="left:85.85px;top:668.84px;font-size:11px;line-height:13px;letter-spacing:-0.11px;color:#111111;">Lock Clip</div>
<div class="bx" style="left:149px;top:691px;width:74px;height:21.8px;background:#8f8f8f;border-color:#4a4a4a"></div>
<div class="t " style="left:85.89px;top:695.84px;font-size:11px;line-height:13px;letter-spacing:-0.02px;color:#111111;">Lock Track</div>
<svg class="ov" width="237" height="720" viewBox="0 0 237 720">
<path d="M174.5 612.75A19.8 19.8 0 1 1 194.3 612.75M182.5 598.89L174.5 612.75" fill="none" stroke="#000000" stroke-width="2.6" stroke-linecap="round"/>
<path d="M35.5 645.8L47.2 640V651.7z" fill="#000000"/>
<path d="M111.2 702.3h7.6l-3.8 6z" fill="#000000"/>
<path d="M86.6 608.8A14.2 14.2 0 0 1 91.48 582.47" fill="none" stroke="#cfcfcf" stroke-width="1.6"/>
<path d="M95.92 582.47A14.2 14.2 0 0 1 100.8 608.8" fill="none" stroke="#888888" stroke-width="2.3"/>
<path d="M93.7 581.2V596.8" stroke="#888888" stroke-width="2.2"/>
<path d="M86.6 671.1A14.2 14.2 0 0 1 91.48 644.77" fill="none" stroke="#cfcfcf" stroke-width="1.6"/>
<path d="M95.92 644.77A14.2 14.2 0 0 1 100.8 671.1" fill="none" stroke="#888888" stroke-width="2.3"/>
<path d="M93.7 643.5V659.1" stroke="#888888" stroke-width="2.2"/>
<path d="M34.3 586.5V684.6" stroke="#000000" stroke-width="2.6"/>
</svg>
<div class="hl" style="box-shadow:inset 0 0 0 1px rgba(255,255,255,0.28)"></div>
</div>
</div>
<div class="panel" style="left:522px;color:#e8e8e8">
<div class="win" style="background:#525252;box-shadow:0 0 0 .9px rgba(255,255,255,.13)">
<div class="tbar" style="background:#282626"></div>
<div class="light" style="left:5.9px;top:6.9px;background:#4a4848"></div>
<div class="light" style="left:23.4px;top:6.9px;background:#4a4848"></div>
<div class="light" style="left:40.9px;top:6.9px;background:#4a4848"></div>
<div class="t tt" style="left:18.61px;top:4.45px;font-size:13px;line-height:16px;letter-spacing:0.43px;color:#6c6a6a;">Inspector</div>
<div class="red"></div>
<div class="t " style="left:19.5px;top:32.17px;font-size:13.5px;line-height:16px;letter-spacing:0.4px;color:#1a0808;">1-MIDI</div>
<div class="send" style="top:58.2px;background:#363636"></div>
<div class="t " style="left:-60.68px;top:63.74px;font-size:11px;line-height:13px;letter-spacing:0.44px;font-weight:bold;">A-Reverb</div>
<div class="send" style="top:130.4px;background:#363636"></div>
<div class="t " style="left:-60.75px;top:134.64px;font-size:11px;line-height:13px;letter-spacing:0.3px;font-weight:bold;">B-Delay</div>
<div class="send" style="top:201.2px;background:#363636"></div>
<div class="send" style="top:272.8px;background:#363636"></div>
<div class="pill" style="left:93px;top:63px;width:54px;height:16px;background:#363636;border-color:#1a1a1a"></div>
<div class="t " style="left:19.72px;top:65.14px;font-size:11px;line-height:13px;letter-spacing:0.44px;">-70.00</div>
<div class="bx" style="left:93px;top:90px;width:54px;height:15px;background:#2a2a2a;border-color:#1a1a1a"></div>
<div class="t " style="left:19.62px;top:91.04px;font-size:11px;line-height:13px;letter-spacing:0.45px;">0.00</div>
<div class="bx" style="left:93px;top:116px;width:54px;height:21px;background:#484848;border-color:#1a1a1a"></div>
<div class="t " style="left:19.46px;top:120.44px;font-size:11px;line-height:13px;letter-spacing:-0.08px;color:#e8e8e8;">Stereo</div>
<div class="t " style="left:20.61px;top:144.54px;font-size:11px;line-height:13px;letter-spacing:-0.79px;">Pan</div>
<div class="t " style="left:21px;top:211.31px;font-size:10.5px;line-height:13px;">C</div>
<div class="bx" style="left:93.2px;top:232.2px;width:55.8px;height:32.6px;background:#F39420;border-color:#1a1a1a"></div>
<div class="t big" style="left:21px;top:237.73px;font-size:16.5px;line-height:20px;color:#111;">1</div>
<div class="bx" style="left:93.2px;top:270.2px;width:55.8px;height:21.4px;background:#404040;border-color:#1a1a1a"></div>
<div class="t " style="left:21px;top:275.38px;font-size:10px;line-height:12px;color:#e8e8e8;">S</div>
<div class="bx" style="left:93.2px;top:298.7px;width:55.8px;height:20.8px;background:#F21D1D;border-color:#1a1a1a"></div>
<div class="dot" style="left:117px;top:305px"></div>
<div class="meter" style="background:#161616"></div>
<div style="position:absolute;left:176px;top:62px;width:1.1px;height:302.4px;background:#525252"></div>
<div style="position:absolute;left:163px;top:79.5px;width:28px;height:1.1px;background:#525252"></div>
<div style="position:absolute;left:163px;top:362.8px;width:27.8px;height:1.6px;background:#14f06a"></div>
<div style="position:absolute;left:176px;top:362.8px;width:1.1px;height:1.6px;background:#525252"></div>
<div class="t " style="left:114.3px;top:74.29px;font-size:11px;line-height:13px;">0</div>
<div class="t " style="left:114.3px;top:97.84px;font-size:11px;line-height:13px;">6</div>
<div class="t " style="left:114.3px;top:123.49px;font-size:11px;line-height:13px;">12</div>
<div class="t " style="left:114.3px;top:146.79px;font-size:11px;line-height:13px;">18</div>
<div class="t " style="left:114.3px;top:170.09px;font-size:11px;line-height:13px;">24</div>
<div class="t " style="left:114.3px;top:195.89px;font-size:11px;line-height:13px;">30</div>
<div class="t " style="left:114.3px;top:220.59px;font-size:11px;line-height:13px;">36</div>
<div class="t " style="left:114.3px;top:245.09px;font-size:11px;line-height:13px;">42</div>
<div class="t " style="left:114.3px;top:269.09px;font-size:11px;line-height:13px;">48</div>
<div class="t " style="left:114.3px;top:293.09px;font-size:11px;line-height:13px;">54</div>
<div class="t " style="left:114.3px;top:317.39px;font-size:11px;line-height:13px;">60</div>
<svg class="ov" width="237" height="720" viewBox="0 0 237 720">
<path d="M29.45 120.06A19.7 19.7 0 1 1 49.15 120.06M37.4 106.29L29.45 120.06" fill="none" stroke="#e8e8e8" stroke-width="2.5" stroke-linecap="round"/>
<path d="M29.45 191.16A19.7 19.7 0 1 1 49.15 191.16M37.4 177.39L29.45 191.16" fill="none" stroke="#e8e8e8" stroke-width="2.5" stroke-linecap="round"/>
<path d="M29.4 262.72A20 20 0 1 1 49.4 262.72M37.5 248.69L29.4 262.72" fill="none" stroke="#2a2a2a" stroke-width="2.0" stroke-linecap="round"/>
<path d="M29.4 334.32A20 20 0 1 1 49.4 334.32M37.5 320.29L29.4 334.32" fill="none" stroke="#2a2a2a" stroke-width="2.0" stroke-linecap="round"/>
<path d="M193.6 103.55h7.4M193.6 129.2h7.4M193.6 152.5h7.4M193.6 175.8h7.4M193.6 201.6h7.4M193.6 226.3h7.4M193.6 250.8h7.4M193.6 274.8h7.4M193.6 298.8h7.4M193.6 323.1h7.4" stroke="#e8e8e8" stroke-width="1.3"/>
<path d="M110.9 205.15A19.8 19.8 0 0 1 117.36 168.5M124.24 168.5A19.8 19.8 0 0 1 130.7 205.15" fill="none" stroke="#0e0e0e" stroke-width="2.4" stroke-linecap="round"/>
<path d="M120.8 166.5L120.8 183.5" stroke="#0e0e0e" stroke-width="2.4" stroke-linecap="butt"/>
<path d="M116.6 160.6h8.8l-4.4 4.6z" fill="#1a1a1a"/>
<path d="M191.4 80L201.2 74.9V85.1z" fill="#6e6e6e" stroke="#151515" stroke-width="1"/>
<path d="M104.4 361.9L121 333.2L137.7 362.2M121.4 340.3L108.9 361.5H134.3M118.6 349.9H129.5" fill="none" stroke="#ffffff" stroke-width="1.4" stroke-linejoin="miter"/>
<circle cx="23.9" cy="38.5" r="11.3" fill="none" stroke="#1a0a0a" stroke-width="1.2"/>
<path d="M17.7 38.5L24.7 33.2V43.8z" fill="#140808"/>
<path d="M24.7 38.6H30" stroke="#140808" stroke-width="2.3"/>
<circle cx="213.5" cy="38.5" r="11.3" fill="none" stroke="#1a0a0a" stroke-width="1.2"/>
<path d="M219.7 38.5L212.7 33.2V43.8z" fill="#140808"/>
<path d="M212.7 38.6H207.4" stroke="#140808" stroke-width="2.3"/>
</svg>
<div class="pal" style="background:#161616"></div>
<i class="sw" style="left:6.2px;top:374.5px;background-color:#ff8da2"></i>
<i class="sw" style="left:22.6px;top:374.5px;background-color:#ffa20b"></i>
<i class="sw" style="left:39px;top:374.5px;background-color:#d7990d"></i>
<i class="sw" style="left:55.4px;top:374.5px;background-color:#faf764"></i>
<i class="sw" style="left:71.8px;top:374.5px;background-color:#bcff00"></i>
<i class="sw" style="left:88.2px;top:374.5px;background-color:#00ff16"></i>
<i class="sw" style="left:104.6px;top:374.5px;background-color:#06ffa5"></i>
<i class="sw" style="left:121px;top:374.5px;background-color:#43ffee"></i>
<i class="sw" style="left:137.4px;top:374.5px;background-color:#81c7ff"></i>
<i class="sw" style="left:153.8px;top:374.5px;background-color:#4b80fa"></i>
<i class="sw" style="left:170.2px;top:374.5px;background-color:#8da6ff"></i>
<i class="sw" style="left:186.6px;top:374.5px;background-color:#e662f4"></i>
<i class="sw" style="left:203px;top:374.5px;background-color:#fa47a5"></i>
<i class="sw" style="left:219.4px;top:374.5px;background-color:#ffffff"></i>
<i class="sw" style="left:6.2px;top:390.9px;background-color:#ff2929"></i>
<i class="sw" style="left:22.6px;top:390.9px;background-color:#ff6600"></i>
<i class="sw" style="left:39px;top:390.9px;background-color:#a07041"></i>
<i class="sw" style="left:55.4px;top:390.9px;background-color:#fff40e"></i>
<i class="sw" style="left:71.8px;top:390.9px;background-color:#78ff51"></i>
<i class="sw" style="left:88.2px;top:390.9px;background-color:#2dd100"></i>
<i class="sw" style="left:104.6px;top:390.9px;background-color:#00ccb8"></i>
<i class="sw" style="left:121px;top:390.9px;background-color:#00f6ff"></i>
<i class="sw" style="left:137.4px;top:390.9px;background-color:#00acff"></i>
<i class="sw" style="left:153.8px;top:390.9px;background-color:#0084d5"></i>
<i class="sw" style="left:170.2px;top:390.9px;background-color:#8967fa"></i>
<i class="sw" style="left:186.6px;top:390.9px;background-color:#be71d1"></i>
<i class="sw" style="left:203px;top:390.9px;background-color:#ff28e5"></i>
<i class="sw" style="left:219.4px;top:390.9px;background-color:#d0d0d0"></i>
<i class="sw" style="left:6.2px;top:407.3px;background-color:#f55f4f"></i>
<i class="sw" style="left:22.6px;top:407.3px;background-color:#ff9e65"></i>
<i class="sw" style="left:39px;top:407.3px;background-color:#daac63"></i>
<i class="sw" style="left:55.4px;top:407.3px;background-color:#ecff9f"></i>
<i class="sw" style="left:71.8px;top:407.3px;background-color:#d1e78a"></i>
<i class="sw" style="left:88.2px;top:407.3px;background-color:#b9d464"></i>
<i class="sw" style="left:104.6px;top:407.3px;background-color:#96c885"></i>
<i class="sw" style="left:121px;top:407.3px;background-color:#ceffde"></i>
<i class="sw" style="left:137.4px;top:407.3px;background-color:#c7f3fc"></i>
<i class="sw" style="left:153.8px;top:407.3px;background-color:#b7c1ea"></i>
<i class="sw" style="left:170.2px;top:407.3px;background-color:#cfb9eb"></i>
<i class="sw" style="left:186.6px;top:407.3px;background-color:#af95f3"></i>
<i class="sw" style="left:203px;top:407.3px;background-color:#e6dbe1"></i>
<i class="sw" style="left:219.4px;top:407.3px;background-color:#a9a9a9"></i>
<i class="sw" style="left:6.2px;top:423.7px;background-color:#ce8f86"></i>
<i class="sw" style="left:22.6px;top:423.7px;background-color:#c0804a"></i>
<i class="sw" style="left:39px;top:423.7px;background-color:#9d8264"></i>
<i class="sw" style="left:55.4px;top:423.7px;background-color:#c2bc59"></i>
<i class="sw" style="left:71.8px;top:423.7px;background-color:#a7c400"></i>
<i class="sw" style="left:88.2px;top:423.7px;background-color:#78b63d"></i>
<i class="sw" style="left:104.6px;top:423.7px;background-color:#7fc6bc"></i>
<i class="sw" style="left:121px;top:423.7px;background-color:#97b4c9"></i>
<i class="sw" style="left:137.4px;top:423.7px;background-color:#7fa6ca"></i>
<i class="sw" style="left:153.8px;top:423.7px;background-color:#7f93d8"></i>
<i class="sw" style="left:170.2px;top:423.7px;background-color:#a793ba"></i>
<i class="sw" style="left:186.6px;top:423.7px;background-color:#c39cc2"></i>
<i class="sw" style="left:203px;top:423.7px;background-color:#c76b98"></i>
<i class="sw" style="left:219.4px;top:423.7px;background-color:#7b7b7b"></i>
<i class="sw" style="left:6.2px;top:440.1px;background-color:#c22b2b"></i>
<i class="sw" style="left:22.6px;top:440.1px;background-color:#b74c25"></i>
<i class="sw" style="left:39px;top:440.1px;background-color:#784d3c"></i>
<i class="sw" style="left:55.4px;top:440.1px;background-color:#e4c600"></i>
<i class="sw" style="left:71.8px;top:440.1px;background-color:#859a09"></i>
<i class="sw" style="left:88.2px;top:440.1px;background-color:#4aa721"></i>
<i class="sw" style="left:104.6px;top:440.1px;background-color:#00a695"></i>
<i class="sw" style="left:121px;top:440.1px;background-color:#18668f"></i>
<i class="sw" style="left:137.4px;top:440.1px;background-color:#142eab"></i>
<i class="sw" style="left:153.8px;top:440.1px;background-color:#2852b4"></i>
<i class="sw" style="left:170.2px;top:440.1px;background-color:#6347bf"></i>
<i class="sw" style="left:186.6px;top:440.1px;background-color:#ae43ba"></i>
<i class="sw" style="left:203px;top:440.1px;background-color:#e32270"></i>
<i class="sw" style="left:219.4px;top:440.1px;background-color:#3c3c3c"></i>
<div class="tab" style="left:3.8px;background:#F39420;border-color:#F39420"></div>
<div class="t " style="left:-68.91px;top:461.54px;font-size:11px;line-height:13px;letter-spacing:-0.02px;color:#1a1a1a;">Track</div>
<div class="tab" style="left:62.4px;border-color:#F39420;--a:#F39420"></div>
<div class="t tb" style="left:-10.03px;top:461.54px;font-size:11px;line-height:13px;letter-spacing:0.14px;color:#F39420;">Arrange</div>
<div class="tab" style="left:121px;border-color:#F39420;--a:#F39420"></div>
<div class="t tb" style="left:48.32px;top:461.54px;font-size:11px;line-height:13px;letter-spacing:-0.36px;color:#F39420;">Session</div>
<div class="tab" style="left:179.6px;border-color:#F39420;--a:#F39420"></div>
<div class="t tb" style="left:107.11px;top:461.54px;font-size:11px;line-height:13px;letter-spacing:0.03px;color:#F39420;">Selected</div>
<div class="t " style="left:-40.25px;top:489.94px;font-size:11px;line-height:13px;letter-spacing:0px;">Track Colour To Clips</div>
<div class="t " style="left:-65px;top:514.34px;font-size:11px;line-height:13px;letter-spacing:0px;">Add Tracks</div>
<div class="pill" style="left:133px;top:489.5px;width:46px;height:15px;background:#2a2a2a;border-color:#111111"></div>
<div class="t " style="left:56.01px;top:491.04px;font-size:11px;line-height:13px;letter-spacing:0.03px;color:#ffffff;">Arrange</div>
<div class="pill" style="left:185.6px;top:489.5px;width:46px;height:15px;background:#2a2a2a;border-color:#111111"></div>
<div class="t " style="left:108.41px;top:491.04px;font-size:11px;line-height:13px;letter-spacing:-0.39px;color:#ffffff;">Session</div>
<div class="pill" style="left:79px;top:514px;width:46px;height:15px;background:#2a2a2a;border-color:#111111"></div>
<div class="t " style="left:1.96px;top:515.54px;font-size:11px;line-height:13px;letter-spacing:-0.07px;color:#ffffff;">MIDI</div>
<div class="pill" style="left:133px;top:514px;width:46px;height:15px;background:#2a2a2a;border-color:#111111"></div>
<div class="t " style="left:55.98px;top:515.54px;font-size:11px;line-height:13px;letter-spacing:-0.03px;color:#ffffff;">Audio</div>
<div class="pill" style="left:185.6px;top:514px;width:46px;height:15px;background:#2a2a2a;border-color:#111111"></div>
<div class="t " style="left:108.6px;top:515.54px;font-size:11px;line-height:13px;letter-spacing:0px;color:#ffffff;">Return</div>
<div style="position:absolute;left:0;top:535px;width:129px;height:24px;background:#484848"></div>
<div class="t " style="left:-36.31px;top:540.47px;font-size:11.5px;line-height:14px;letter-spacing:-0.01px;color:#1e1e1e;">No Clip Selected</div>
<div style="position:absolute;left:0;top:559px;width:129px;height:159px;background:#363636;border-bottom-left-radius:6px"></div>
<div style="position:absolute;left:129px;top:535px;width:3.6px;height:183px;background:#2e2e2e"></div>
<div style="position:absolute;left:132.6px;top:535px;width:104.4px;height:183px;background:#333333;border-bottom-right-radius:6px"></div>
<div class="t " style="left:-67.85px;top:567.14px;font-size:11px;line-height:13px;letter-spacing:-0.09px;">Clip Gain</div>
<div class="t " style="left:-6.4px;top:567.14px;font-size:11px;line-height:13px;letter-spacing:-0.19px;">Coarse</div>
<div class="t " style="left:-6.45px;top:610.14px;font-size:11px;line-height:13px;letter-spacing:0.09px;">0 st</div>
<div class="t " style="left:-6.15px;top:628.94px;font-size:11px;line-height:13px;letter-spacing:-0.3px;">Fine</div>
<div class="t " style="left:-6.2px;top:672.34px;font-size:11px;line-height:13px;">0</div>
<div style="position:absolute;left:10px;top:696.8px;width:53.5px;height:17px;background:#444444"></div>
<div class="t " style="left:-63.59px;top:699.36px;font-size:9.5px;line-height:11px;letter-spacing:-0.18px;color:#dddddd;">0 dB</div>
<div class="bx" style="left:69.5px;top:698.2px;width:52px;height:14.6px;background:#2a2a2a;border-color:#1a1a1a"></div>
<div class="t " style="left:-13.45px;top:699.04px;font-size:11px;line-height:13px;letter-spacing:0.09px;color:#ffffff;">Beats</div>
<div class="bx" style="left:135.2px;top:538.8px;width:13.8px;height:13.6px;background:#F39420;border-color:#1a1a1a"></div>
<div class="t " style="left:85.63px;top:557.54px;font-size:11px;line-height:13px;letter-spacing:0.06px;font-weight:bold;">Selected</div>
<div class="t " style="left:86.13px;top:619.74px;font-size:11px;line-height:13px;letter-spacing:0.26px;font-weight:bold;">Parameter</div>
<div class="bx" style="left:149px;top:637px;width:74px;height:21.8px;background:#484848;border-color:#1a1a1a"></div>
<div class="t " style="left:85.81px;top:641.84px;font-size:11px;line-height:13px;letter-spacing:-0.19px;color:#eeeeee;">Lock Param</div>
<div class="bx" style="left:149px;top:664px;width:74px;height:21.8px;background:#484848;border-color:#1a1a1a"></div>
<div class="t " style="left:85.85px;top:668.84px;font-size:11px;line-height:13px;letter-spacing:-0.11px;color:#eeeeee;">Lock Clip</div>
<div class="bx" style="left:149px;top:691px;width:74px;height:21.8px;background:#484848;border-color:#1a1a1a"></div>
<div class="t " style="left:85.89px;top:695.84px;font-size:11px;line-height:13px;letter-spacing:-0.02px;color:#eeeeee;">Lock Track</div>
<svg class="ov" width="237" height="720" viewBox="0 0 237 720">
<path d="M174.5 612.75A19.8 19.8 0 1 1 194.3 612.75M182.5 598.89L174.5 612.75" fill="none" stroke="#e8e8e8" stroke-width="2.6" stroke-linecap="round"/>
<path d="M35.5 645.8L47.2 640V651.7z" fill="#e8e8e8"/>
<path d="M111.2 702.3h7.6l-3.8 6z" fill="#ffffff"/>
<path d="M86.6 608.8A14.2 14.2 0 0 1 91.48 582.47" fill="none" stroke="#8a8a8a" stroke-width="2.2"/>
<path d="M95.92 582.47A14.2 14.2 0 0 1 100.8 608.8" fill="none" stroke="#2a2a2a" stroke-width="2.3"/>
<path d="M93.7 581.2V596.8" stroke="#2a2a2a" stroke-width="2.2"/>
<path d="M86.6 671.1A14.2 14.2 0 0 1 91.48 644.77" fill="none" stroke="#8a8a8a" stroke-width="2.2"/>
<path d="M95.92 644.77A14.2 14.2 0 0 1 100.8 671.1" fill="none" stroke="#2a2a2a" stroke-width="2.3"/>
<path d="M93.7 643.5V659.1" stroke="#2a2a2a" stroke-width="2.2"/>
<path d="M34.3 586.5V684.6" stroke="#e8e8e8" stroke-width="2.6"/>
</svg>
<div class="hl" style="box-shadow:inset 0 0 0 1px rgba(255,255,255,0.12)"></div>
</div>
</div>
<div class="panel" style="left:782.8px;color:#e6e6e6">
<div class="win" style="background:#363636;box-shadow:0 0 0 .9px rgba(255,255,255,.13)">
<div class="tbar" style="background:#282626"></div>
<div class="light" style="left:5.9px;top:6.9px;background:#4a4848"></div>
<div class="light" style="left:23.4px;top:6.9px;background:#4a4848"></div>
<div class="light" style="left:40.9px;top:6.9px;background:#4a4848"></div>
<div class="t tt" style="left:18.61px;top:4.45px;font-size:13px;line-height:16px;letter-spacing:0.43px;color:#6c6a6a;">Inspector</div>
<div class="red"></div>
<div class="t " style="left:19.5px;top:32.17px;font-size:13.5px;line-height:16px;letter-spacing:0.4px;color:#1a0808;">1-MIDI</div>
<div class="send" style="top:58.2px;background:#1e1e1e"></div>
<div class="t " style="left:-60.68px;top:63.74px;font-size:11px;line-height:13px;letter-spacing:0.44px;font-weight:bold;">A-Reverb</div>
<div class="send" style="top:130.4px;background:#1e1e1e"></div>
<div class="t " style="left:-60.75px;top:134.64px;font-size:11px;line-height:13px;letter-spacing:0.3px;font-weight:bold;">B-Delay</div>
<div class="send" style="top:201.2px;background:#1e1e1e"></div>
<div class="send" style="top:272.8px;background:#1e1e1e"></div>
<div class="pill" style="left:93px;top:63px;width:54px;height:16px;background:#1e1e1e;border-color:#0a0a0a"></div>
<div class="t " style="left:19.72px;top:65.14px;font-size:11px;line-height:13px;letter-spacing:0.44px;">-70.00</div>
<div class="bx" style="left:93px;top:90px;width:54px;height:15px;background:#141414;border-color:#0a0a0a"></div>
<div class="t " style="left:19.62px;top:91.04px;font-size:11px;line-height:13px;letter-spacing:0.45px;">0.00</div>
<div class="bx" style="left:93px;top:116px;width:54px;height:21px;background:#3c3c3c;border-color:#0a0a0a"></div>
<div class="t " style="left:19.46px;top:120.44px;font-size:11px;line-height:13px;letter-spacing:-0.08px;color:#c8c8c8;">Stereo</div>
<div class="t " style="left:20.61px;top:144.54px;font-size:11px;line-height:13px;letter-spacing:-0.79px;">Pan</div>
<div class="t " style="left:21px;top:211.31px;font-size:10.5px;line-height:13px;">C</div>
<div class="bx" style="left:93.2px;top:232.2px;width:55.8px;height:32.6px;background:#F39420;border-color:#0a0a0a"></div>
<div class="t big" style="left:21px;top:237.73px;font-size:16.5px;line-height:20px;color:#111;">1</div>
<div class="bx" style="left:93.2px;top:270.2px;width:55.8px;height:21.4px;background:#444444;border-color:#0a0a0a"></div>
<div class="t " style="left:21px;top:275.38px;font-size:10px;line-height:12px;color:#bbbbbb;">S</div>
<div class="bx" style="left:93.2px;top:298.7px;width:55.8px;height:20.8px;background:#F21D1D;border-color:#0a0a0a"></div>
<div class="dot" style="left:117px;top:305px"></div>
<div class="meter" style="background:#000000"></div>
<div style="position:absolute;left:176px;top:62px;width:1.1px;height:302.4px;background:#363636"></div>
<div style="position:absolute;left:163px;top:79.5px;width:28px;height:1.1px;background:#363636"></div>
<div style="position:absolute;left:163px;top:362.8px;width:27.8px;height:1.6px;background:#14f06a"></div>
<div style="position:absolute;left:176px;top:362.8px;width:1.1px;height:1.6px;background:#363636"></div>
<div class="t " style="left:114.3px;top:74.29px;font-size:11px;line-height:13px;">0</div>
<div class="t " style="left:114.3px;top:97.84px;font-size:11px;line-height:13px;">6</div>
<div class="t " style="left:114.3px;top:123.49px;font-size:11px;line-height:13px;">12</div>
<div class="t " style="left:114.3px;top:146.79px;font-size:11px;line-height:13px;">18</div>
<div class="t " style="left:114.3px;top:170.09px;font-size:11px;line-height:13px;">24</div>
<div class="t " style="left:114.3px;top:195.89px;font-size:11px;line-height:13px;">30</div>
<div class="t " style="left:114.3px;top:220.59px;font-size:11px;line-height:13px;">36</div>
<div class="t " style="left:114.3px;top:245.09px;font-size:11px;line-height:13px;">42</div>
<div class="t " style="left:114.3px;top:269.09px;font-size:11px;line-height:13px;">48</div>
<div class="t " style="left:114.3px;top:293.09px;font-size:11px;line-height:13px;">54</div>
<div class="t " style="left:114.3px;top:317.39px;font-size:11px;line-height:13px;">60</div>
<svg class="ov" width="237" height="720" viewBox="0 0 237 720">
<path d="M29.45 120.06A19.7 19.7 0 1 1 49.15 120.06M37.4 106.29L29.45 120.06" fill="none" stroke="#e6e6e6" stroke-width="2.5" stroke-linecap="round"/>
<path d="M29.45 191.16A19.7 19.7 0 1 1 49.15 191.16M37.4 177.39L29.45 191.16" fill="none" stroke="#e6e6e6" stroke-width="2.5" stroke-linecap="round"/>
<path d="M29.4 262.72A20 20 0 1 1 49.4 262.72M37.5 248.69L29.4 262.72" fill="none" stroke="#1c1c1c" stroke-width="2.0" stroke-linecap="round"/>
<path d="M29.4 334.32A20 20 0 1 1 49.4 334.32M37.5 320.29L29.4 334.32" fill="none" stroke="#1c1c1c" stroke-width="2.0" stroke-linecap="round"/>
<path d="M193.6 103.55h7.4M193.6 129.2h7.4M193.6 152.5h7.4M193.6 175.8h7.4M193.6 201.6h7.4M193.6 226.3h7.4M193.6 250.8h7.4M193.6 274.8h7.4M193.6 298.8h7.4M193.6 323.1h7.4" stroke="#e6e6e6" stroke-width="1.3"/>
<path d="M110.9 205.15A19.8 19.8 0 0 1 117.36 168.5M124.24 168.5A19.8 19.8 0 0 1 130.7 205.15" fill="none" stroke="#050505" stroke-width="2.4" stroke-linecap="round"/>
<path d="M120.8 166.5L120.8 183.5" stroke="#050505" stroke-width="2.4" stroke-linecap="butt"/>
<path d="M116.6 160.6h8.8l-4.4 4.6z" fill="#0a0a0a"/>
<path d="M191.4 80L201.2 74.9V85.1z" fill="#6a6a6a" stroke="#000000" stroke-width="1"/>
<path d="M104.4 361.9L121 333.2L137.7 362.2M121.4 340.3L108.9 361.5H134.3M118.6 349.9H129.5" fill="none" stroke="#ffffff" stroke-width="1.4" stroke-linejoin="miter"/>
<circle cx="23.9" cy="38.5" r="11.3" fill="none" stroke="#1a0a0a" stroke-width="1.2"/>
<path d="M17.7 38.5L24.7 33.2V43.8z" fill="#140808"/>
<path d="M24.7 38.6H30" stroke="#140808" stroke-width="2.3"/>
<circle cx="213.5" cy="38.5" r="11.3" fill="none" stroke="#1a0a0a" stroke-width="1.2"/>
<path d="M219.7 38.5L212.7 33.2V43.8z" fill="#140808"/>
<path d="M212.7 38.6H207.4" stroke="#140808" stroke-width="2.3"/>
</svg>
<div class="pal" style="background:#0a0a0a"></div>
<i class="sw" style="left:6.2px;top:374.5px;background-color:#ff8da2"></i>
<i class="sw" style="left:22.6px;top:374.5px;background-color:#ffa20b"></i>
<i class="sw" style="left:39px;top:374.5px;background-color:#d7990d"></i>
<i class="sw" style="left:55.4px;top:374.5px;background-color:#faf764"></i>
<i class="sw" style="left:71.8px;top:374.5px;background-color:#bcff00"></i>
<i class="sw" style="left:88.2px;top:374.5px;background-color:#00ff16"></i>
<i class="sw" style="left:104.6px;top:374.5px;background-color:#06ffa5"></i>
<i class="sw" style="left:121px;top:374.5px;background-color:#43ffee"></i>
<i class="sw" style="left:137.4px;top:374.5px;background-color:#81c7ff"></i>
<i class="sw" style="left:153.8px;top:374.5px;background-color:#4b80fa"></i>
<i class="sw" style="left:170.2px;top:374.5px;background-color:#8da6ff"></i>
<i class="sw" style="left:186.6px;top:374.5px;background-color:#e662f4"></i>
<i class="sw" style="left:203px;top:374.5px;background-color:#fa47a5"></i>
<i class="sw" style="left:219.4px;top:374.5px;background-color:#ffffff"></i>
<i class="sw" style="left:6.2px;top:390.9px;background-color:#ff2929"></i>
<i class="sw" style="left:22.6px;top:390.9px;background-color:#ff6600"></i>
<i class="sw" style="left:39px;top:390.9px;background-color:#a07041"></i>
<i class="sw" style="left:55.4px;top:390.9px;background-color:#fff40e"></i>
<i class="sw" style="left:71.8px;top:390.9px;background-color:#78ff51"></i>
<i class="sw" style="left:88.2px;top:390.9px;background-color:#2dd100"></i>
<i class="sw" style="left:104.6px;top:390.9px;background-color:#00ccb8"></i>
<i class="sw" style="left:121px;top:390.9px;background-color:#00f6ff"></i>
<i class="sw" style="left:137.4px;top:390.9px;background-color:#00acff"></i>
<i class="sw" style="left:153.8px;top:390.9px;background-color:#0084d5"></i>
<i class="sw" style="left:170.2px;top:390.9px;background-color:#8967fa"></i>
<i class="sw" style="left:186.6px;top:390.9px;background-color:#be71d1"></i>
<i class="sw" style="left:203px;top:390.9px;background-color:#ff28e5"></i>
<i class="sw" style="left:219.4px;top:390.9px;background-color:#d0d0d0"></i>
<i class="sw" style="left:6.2px;top:407.3px;background-color:#f55f4f"></i>
<i class="sw" style="left:22.6px;top:407.3px;background-color:#ff9e65"></i>
<i class="sw" style="left:39px;top:407.3px;background-color:#daac63"></i>
<i class="sw" style="left:55.4px;top:407.3px;background-color:#ecff9f"></i>
<i class="sw" style="left:71.8px;top:407.3px;background-color:#d1e78a"></i>
<i class="sw" style="left:88.2px;top:407.3px;background-color:#b9d464"></i>
<i class="sw" style="left:104.6px;top:407.3px;background-color:#96c885"></i>
<i class="sw" style="left:121px;top:407.3px;background-color:#ceffde"></i>
<i class="sw" style="left:137.4px;top:407.3px;background-color:#c7f3fc"></i>
<i class="sw" style="left:153.8px;top:407.3px;background-color:#b7c1ea"></i>
<i class="sw" style="left:170.2px;top:407.3px;background-color:#cfb9eb"></i>
<i class="sw" style="left:186.6px;top:407.3px;background-color:#af95f3"></i>
<i class="sw" style="left:203px;top:407.3px;background-color:#e6dbe1"></i>
<i class="sw" style="left:219.4px;top:407.3px;background-color:#a9a9a9"></i>
<i class="sw" style="left:6.2px;top:423.7px;background-color:#ce8f86"></i>
<i class="sw" style="left:22.6px;top:423.7px;background-color:#c0804a"></i>
<i class="sw" style="left:39px;top:423.7px;background-color:#9d8264"></i>
<i class="sw" style="left:55.4px;top:423.7px;background-color:#c2bc59"></i>
<i class="sw" style="left:71.8px;top:423.7px;background-color:#a7c400"></i>
<i class="sw" style="left:88.2px;top:423.7px;background-color:#78b63d"></i>
<i class="sw" style="left:104.6px;top:423.7px;background-color:#7fc6bc"></i>
<i class="sw" style="left:121px;top:423.7px;background-color:#97b4c9"></i>
<i class="sw" style="left:137.4px;top:423.7px;background-color:#7fa6ca"></i>
<i class="sw" style="left:153.8px;top:423.7px;background-color:#7f93d8"></i>
<i class="sw" style="left:170.2px;top:423.7px;background-color:#a793ba"></i>
<i class="sw" style="left:186.6px;top:423.7px;background-color:#c39cc2"></i>
<i class="sw" style="left:203px;top:423.7px;background-color:#c76b98"></i>
<i class="sw" style="left:219.4px;top:423.7px;background-color:#7b7b7b"></i>
<i class="sw" style="left:6.2px;top:440.1px;background-color:#c22b2b"></i>
<i class="sw" style="left:22.6px;top:440.1px;background-color:#b74c25"></i>
<i class="sw" style="left:39px;top:440.1px;background-color:#784d3c"></i>
<i class="sw" style="left:55.4px;top:440.1px;background-color:#e4c600"></i>
<i class="sw" style="left:71.8px;top:440.1px;background-color:#859a09"></i>
<i class="sw" style="left:88.2px;top:440.1px;background-color:#4aa721"></i>
<i class="sw" style="left:104.6px;top:440.1px;background-color:#00a695"></i>
<i class="sw" style="left:121px;top:440.1px;background-color:#18668f"></i>
<i class="sw" style="left:137.4px;top:440.1px;background-color:#142eab"></i>
<i class="sw" style="left:153.8px;top:440.1px;background-color:#2852b4"></i>
<i class="sw" style="left:170.2px;top:440.1px;background-color:#6347bf"></i>
<i class="sw" style="left:186.6px;top:440.1px;background-color:#ae43ba"></i>
<i class="sw" style="left:203px;top:440.1px;background-color:#e32270"></i>
<i class="sw" style="left:219.4px;top:440.1px;background-color:#3c3c3c"></i>
<div class="tab" style="left:3.8px;background:#F39420;border-color:#F39420"></div>
<div class="t " style="left:-68.91px;top:461.54px;font-size:11px;line-height:13px;letter-spacing:-0.02px;color:#1a1a1a;">Track</div>
<div class="tab" style="left:62.4px;border-color:#F39420;--a:#F39420"></div>
<div class="t tb" style="left:-10.03px;top:461.54px;font-size:11px;line-height:13px;letter-spacing:0.14px;color:#F39420;">Arrange</div>
<div class="tab" style="left:121px;border-color:#F39420;--a:#F39420"></div>
<div class="t tb" style="left:48.32px;top:461.54px;font-size:11px;line-height:13px;letter-spacing:-0.36px;color:#F39420;">Session</div>
<div class="tab" style="left:179.6px;border-color:#F39420;--a:#F39420"></div>
<div class="t tb" style="left:107.11px;top:461.54px;font-size:11px;line-height:13px;letter-spacing:0.03px;color:#F39420;">Selected</div>
<div class="t " style="left:-40.25px;top:489.94px;font-size:11px;line-height:13px;letter-spacing:0px;">Track Colour To Clips</div>
<div class="t " style="left:-65px;top:514.34px;font-size:11px;line-height:13px;letter-spacing:0px;">Add Tracks</div>
<div class="pill" style="left:133px;top:489.5px;width:46px;height:15px;background:#2a2a2a;border-color:#0a0a0a"></div>
<div class="t " style="left:56.01px;top:491.04px;font-size:11px;line-height:13px;letter-spacing:0.03px;color:#dddddd;">Arrange</div>
<div class="pill" style="left:185.6px;top:489.5px;width:46px;height:15px;background:#2a2a2a;border-color:#0a0a0a"></div>
<div class="t " style="left:108.41px;top:491.04px;font-size:11px;line-height:13px;letter-spacing:-0.39px;color:#dddddd;">Session</div>
<div class="pill" style="left:79px;top:514px;width:46px;height:15px;background:#2a2a2a;border-color:#0a0a0a"></div>
<div class="t " style="left:1.96px;top:515.54px;font-size:11px;line-height:13px;letter-spacing:-0.07px;color:#dddddd;">MIDI</div>
<div class="pill" style="left:133px;top:514px;width:46px;height:15px;background:#2a2a2a;border-color:#0a0a0a"></div>
<div class="t " style="left:55.98px;top:515.54px;font-size:11px;line-height:13px;letter-spacing:-0.03px;color:#dddddd;">Audio</div>
<div class="pill" style="left:185.6px;top:514px;width:46px;height:15px;background:#2a2a2a;border-color:#0a0a0a"></div>
<div class="t " style="left:108.6px;top:515.54px;font-size:11px;line-height:13px;letter-spacing:0px;color:#dddddd;">Return</div>
<div style="position:absolute;left:0;top:535px;width:129px;height:24px;background:#3a3a3a"></div>
<div class="t " style="left:-36.31px;top:540.47px;font-size:11.5px;line-height:14px;letter-spacing:-0.01px;color:#161616;">No Clip Selected</div>
<div style="position:absolute;left:0;top:559px;width:129px;height:159px;background:#1e1e1e;border-bottom-left-radius:6px"></div>
<div style="position:absolute;left:129px;top:535px;width:3.6px;height:183px;background:#1a1a1a"></div>
<div style="position:absolute;left:132.6px;top:535px;width:104.4px;height:183px;background:#1e1e1e;border-bottom-right-radius:6px"></div>
<div class="t " style="left:-67.85px;top:567.14px;font-size:11px;line-height:13px;letter-spacing:-0.09px;">Clip Gain</div>
<div class="t " style="left:-6.4px;top:567.14px;font-size:11px;line-height:13px;letter-spacing:-0.19px;">Coarse</div>
<div class="t " style="left:-6.45px;top:610.14px;font-size:11px;line-height:13px;letter-spacing:0.09px;">0 st</div>
<div class="t " style="left:-6.15px;top:628.94px;font-size:11px;line-height:13px;letter-spacing:-0.3px;">Fine</div>
<div class="t " style="left:-6.2px;top:672.34px;font-size:11px;line-height:13px;">0</div>
<div style="position:absolute;left:10px;top:696.8px;width:53.5px;height:17px;background:#363636"></div>
<div class="t " style="left:-63.59px;top:699.36px;font-size:9.5px;line-height:11px;letter-spacing:-0.18px;color:#cccccc;">0 dB</div>
<div class="bx" style="left:69.5px;top:698.2px;width:52px;height:14.6px;background:#141414;border-color:#0a0a0a"></div>
<div class="t " style="left:-13.45px;top:699.04px;font-size:11px;line-height:13px;letter-spacing:0.09px;color:#ffffff;">Beats</div>
<div class="bx" style="left:135.2px;top:538.8px;width:13.8px;height:13.6px;background:#F39420;border-color:#0a0a0a"></div>
<div class="t " style="left:85.63px;top:557.54px;font-size:11px;line-height:13px;letter-spacing:0.06px;font-weight:bold;">Selected</div>
<div class="t " style="left:86.13px;top:619.74px;font-size:11px;line-height:13px;letter-spacing:0.26px;font-weight:bold;">Parameter</div>
<div class="bx" style="left:149px;top:637px;width:74px;height:21.8px;background:#2e2e2e;border-color:#0a0a0a"></div>
<div class="t " style="left:85.81px;top:641.84px;font-size:11px;line-height:13px;letter-spacing:-0.19px;color:#dddddd;">Lock Param</div>
<div class="bx" style="left:149px;top:664px;width:74px;height:21.8px;background:#2e2e2e;border-color:#0a0a0a"></div>
<div class="t " style="left:85.85px;top:668.84px;font-size:11px;line-height:13px;letter-spacing:-0.11px;color:#dddddd;">Lock Clip</div>
<div class="bx" style="left:149px;top:691px;width:74px;height:21.8px;background:#2e2e2e;border-color:#0a0a0a"></div>
<div class="t " style="left:85.89px;top:695.84px;font-size:11px;line-height:13px;letter-spacing:-0.02px;color:#dddddd;">Lock Track</div>
<svg class="ov" width="237" height="720" viewBox="0 0 237 720">
<path d="M174.5 612.75A19.8 19.8 0 1 1 194.3 612.75M182.5 598.89L174.5 612.75" fill="none" stroke="#e6e6e6" stroke-width="2.6" stroke-linecap="round"/>
<path d="M35.5 645.8L47.2 640V651.7z" fill="#e6e6e6"/>
<path d="M111.2 702.3h7.6l-3.8 6z" fill="#ffffff"/>
<path d="M86.6 608.8A14.2 14.2 0 0 1 91.48 582.47" fill="none" stroke="#777777" stroke-width="2.2"/>
<path d="M95.92 582.47A14.2 14.2 0 0 1 100.8 608.8" fill="none" stroke="#1b1b1b" stroke-width="2.3"/>
<path d="M93.7 581.2V596.8" stroke="#1b1b1b" stroke-width="2.2"/>
<path d="M86.6 671.1A14.2 14.2 0 0 1 91.48 644.77" fill="none" stroke="#777777" stroke-width="2.2"/>
<path d="M95.92 644.77A14.2 14.2 0 0 1 100.8 671.1" fill="none" stroke="#1b1b1b" stroke-width="2.3"/>
<path d="M93.7 643.5V659.1" stroke="#1b1b1b" stroke-width="2.2"/>
<path d="M34.3 586.5V684.6" stroke="#e6e6e6" stroke-width="2.6"/>
</svg>
<div class="hl" style="box-shadow:inset 0 0 0 1px rgba(255,255,255,0.12)"></div>
</div>
</div>
<div class="panel" style="left:1041.8px;color:#111111">
<div class="win" style="background:#909090;box-shadow:0 0 0 .9px rgba(0,0,0,.38)">
<div class="tbar" style="background:#333333"></div>
<div class="light" style="left:5.9px;top:6.9px;background:#ff5f57"></div>
<div class="light" style="left:23.4px;top:6.9px;background:#febc2e"></div>
<div class="light" style="left:40.9px;top:6.9px;background:#5a5a5a"></div>
<div class="t tt" style="left:18.61px;top:4.45px;font-size:13px;line-height:16px;letter-spacing:0.43px;color:#b4b4b4;">Inspector</div>
<div class="red"></div>
<div class="t " style="left:19.5px;top:32.17px;font-size:13.5px;line-height:16px;letter-spacing:0.4px;color:#1a0808;">1-MIDI</div>
<div class="send" style="top:58.2px;background:#bebebe"></div>
<div class="t " style="left:-60.68px;top:63.74px;font-size:11px;line-height:13px;letter-spacing:0.44px;font-weight:bold;">A-Reverb</div>
<div class="send" style="top:130.4px;background:#bebebe"></div>
<div class="t " style="left:-60.75px;top:134.64px;font-size:11px;line-height:13px;letter-spacing:0.3px;font-weight:bold;">B-Delay</div>
<div class="send" style="top:201.2px;background:#bebebe"></div>
<div class="send" style="top:272.8px;background:#bebebe"></div>
<div class="pill" style="left:93px;top:63px;width:54px;height:16px;background:#dcdcdc;border-color:#2a2a2a"></div>
<div class="t " style="left:19.72px;top:65.14px;font-size:11px;line-height:13px;letter-spacing:0.44px;">-70.00</div>
<div class="bx" style="left:93px;top:90px;width:54px;height:15px;background:#d2d2d2;border-color:#555555"></div>
<div class="t " style="left:19.62px;top:91.04px;font-size:11px;line-height:13px;letter-spacing:0.45px;">0.00</div>
<div class="bx" style="left:93px;top:116px;width:54px;height:21px;background:#9e9e9e;border-color:#4a4a4a"></div>
<div class="t " style="left:19.46px;top:120.44px;font-size:11px;line-height:13px;letter-spacing:-0.08px;color:#111111;">Stereo</div>
<div class="t " style="left:20.61px;top:144.54px;font-size:11px;line-height:13px;letter-spacing:-0.79px;">Pan</div>
<div class="t " style="left:21px;top:211.31px;font-size:10.5px;line-height:13px;">C</div>
<div class="bx" style="left:93.2px;top:232.2px;width:55.8px;height:32.6px;background:#FFCB0D;border-color:#4a4a4a"></div>
<div class="t big" style="left:21px;top:237.73px;font-size:16.5px;line-height:20px;color:#111;">1</div>
<div class="bx" style="left:93.2px;top:270.2px;width:55.8px;height:21.4px;background:#a2a2a2;border-color:#4a4a4a"></div>
<div class="t " style="left:21px;top:275.38px;font-size:10px;line-height:12px;color:#111111;">S</div>
<div class="bx" style="left:93.2px;top:298.7px;width:55.8px;height:20.8px;background:#F21D1D;border-color:#4a4a4a"></div>
<div class="dot" style="left:117px;top:305px"></div>
<div class="meter" style="background:#1c222a"></div>
<div style="position:absolute;left:176px;top:62px;width:1.1px;height:302.4px;background:#a0a0a0"></div>
<div style="position:absolute;left:163px;top:79.5px;width:28px;height:1.1px;background:#a0a0a0"></div>
<div style="position:absolute;left:163px;top:362.8px;width:27.8px;height:1.6px;background:#14f06a"></div>
<div style="position:absolute;left:176px;top:362.8px;width:1.1px;height:1.6px;background:#a0a0a0"></div>
<div class="t " style="left:114.3px;top:74.29px;font-size:11px;line-height:13px;">0</div>
<div class="t " style="left:114.3px;top:97.84px;font-size:11px;line-height:13px;">6</div>
<div class="t " style="left:114.3px;top:123.49px;font-size:11px;line-height:13px;">12</div>
<div class="t " style="left:114.3px;top:146.79px;font-size:11px;line-height:13px;">18</div>
<div class="t " style="left:114.3px;top:170.09px;font-size:11px;line-height:13px;">24</div>
<div class="t " style="left:114.3px;top:195.89px;font-size:11px;line-height:13px;">30</div>
<div class="t " style="left:114.3px;top:220.59px;font-size:11px;line-height:13px;">36</div>
<div class="t " style="left:114.3px;top:245.09px;font-size:11px;line-height:13px;">42</div>
<div class="t " style="left:114.3px;top:269.09px;font-size:11px;line-height:13px;">48</div>
<div class="t " style="left:114.3px;top:293.09px;font-size:11px;line-height:13px;">54</div>
<div class="t " style="left:114.3px;top:317.39px;font-size:11px;line-height:13px;">60</div>
<svg class="ov" width="237" height="720" viewBox="0 0 237 720">
<path d="M29.45 120.06A19.7 19.7 0 1 1 49.15 120.06M37.4 106.29L29.45 120.06" fill="none" stroke="#000000" stroke-width="2.5" stroke-linecap="round"/>
<path d="M29.45 191.16A19.7 19.7 0 1 1 49.15 191.16M37.4 177.39L29.45 191.16" fill="none" stroke="#000000" stroke-width="2.5" stroke-linecap="round"/>
<path d="M29.4 262.72A20 20 0 1 1 49.4 262.72M37.5 248.69L29.4 262.72" fill="none" stroke="#5a5a5a" stroke-width="2.0" stroke-linecap="round"/>
<path d="M29.4 334.32A20 20 0 1 1 49.4 334.32M37.5 320.29L29.4 334.32" fill="none" stroke="#5a5a5a" stroke-width="2.0" stroke-linecap="round"/>
<path d="M193.6 103.55h7.4M193.6 129.2h7.4M193.6 152.5h7.4M193.6 175.8h7.4M193.6 201.6h7.4M193.6 226.3h7.4M193.6 250.8h7.4M193.6 274.8h7.4M193.6 298.8h7.4M193.6 323.1h7.4" stroke="#111111" stroke-width="1.3"/>
<path d="M110.9 205.15A19.8 19.8 0 0 1 117.36 168.5M124.24 168.5A19.8 19.8 0 0 1 130.7 205.15" fill="none" stroke="#111111" stroke-width="2.4" stroke-linecap="round"/>
<path d="M120.8 166.5L120.8 183.5" stroke="#111111" stroke-width="2.4" stroke-linecap="butt"/>
<path d="M116.6 160.6h8.8l-4.4 4.6z" fill="#7a7a7a"/>
<path d="M191.4 80L201.2 74.9V85.1z" fill="#dcdcdc" stroke="#555555" stroke-width="1"/>
<path d="M104.4 361.9L121 333.2L137.7 362.2M121.4 340.3L108.9 361.5H134.3M118.6 349.9H129.5" fill="none" stroke="#ffffff" stroke-width="1.4" stroke-linejoin="miter"/>
<circle cx="23.9" cy="38.5" r="11.3" fill="none" stroke="#1a0a0a" stroke-width="1.2"/>
<path d="M17.7 38.5L24.7 33.2V43.8z" fill="#140808"/>
<path d="M24.7 38.6H30" stroke="#140808" stroke-width="2.3"/>
<circle cx="213.5" cy="38.5" r="11.3" fill="none" stroke="#1a0a0a" stroke-width="1.2"/>
<path d="M219.7 38.5L212.7 33.2V43.8z" fill="#140808"/>
<path d="M212.7 38.6H207.4" stroke="#140808" stroke-width="2.3"/>
</svg>
<div class="pal" style="background:#1c222a"></div>
<i class="sw" style="left:6.2px;top:374.5px;background-color:#ff8da2"></i>
<i class="sw" style="left:22.6px;top:374.5px;background-color:#ffa20b"></i>
<i class="sw" style="left:39px;top:374.5px;background-color:#d7990d"></i>
<i class="sw" style="left:55.4px;top:374.5px;background-color:#faf764"></i>
<i class="sw" style="left:71.8px;top:374.5px;background-color:#bcff00"></i>
<i class="sw" style="left:88.2px;top:374.5px;background-color:#00ff16"></i>
<i class="sw" style="left:104.6px;top:374.5px;background-color:#06ffa5"></i>
<i class="sw" style="left:121px;top:374.5px;background-color:#43ffee"></i>
<i class="sw" style="left:137.4px;top:374.5px;background-color:#81c7ff"></i>
<i class="sw" style="left:153.8px;top:374.5px;background-color:#4b80fa"></i>
<i class="sw" style="left:170.2px;top:374.5px;background-color:#8da6ff"></i>
<i class="sw" style="left:186.6px;top:374.5px;background-color:#e662f4"></i>
<i class="sw" style="left:203px;top:374.5px;background-color:#fa47a5"></i>
<i class="sw" style="left:219.4px;top:374.5px;background-color:#ffffff"></i>
<i class="sw" style="left:6.2px;top:390.9px;background-color:#ff2929"></i>
<i class="sw" style="left:22.6px;top:390.9px;background-color:#ff6600"></i>
<i class="sw" style="left:39px;top:390.9px;background-color:#a07041"></i>
<i class="sw" style="left:55.4px;top:390.9px;background-color:#fff40e"></i>
<i class="sw" style="left:71.8px;top:390.9px;background-color:#78ff51"></i>
<i class="sw" style="left:88.2px;top:390.9px;background-color:#2dd100"></i>
<i class="sw" style="left:104.6px;top:390.9px;background-color:#00ccb8"></i>
<i class="sw" style="left:121px;top:390.9px;background-color:#00f6ff"></i>
<i class="sw" style="left:137.4px;top:390.9px;background-color:#00acff"></i>
<i class="sw" style="left:153.8px;top:390.9px;background-color:#0084d5"></i>
<i class="sw" style="left:170.2px;top:390.9px;background-color:#8967fa"></i>
<i class="sw" style="left:186.6px;top:390.9px;background-color:#be71d1"></i>
<i class="sw" style="left:203px;top:390.9px;background-color:#ff28e5"></i>
<i class="sw" style="left:219.4px;top:390.9px;background-color:#d0d0d0"></i>
<i class="sw" style="left:6.2px;top:407.3px;background-color:#f55f4f"></i>
<i class="sw" style="left:22.6px;top:407.3px;background-color:#ff9e65"></i>
<i class="sw" style="left:39px;top:407.3px;background-color:#daac63"></i>
<i class="sw" style="left:55.4px;top:407.3px;background-color:#ecff9f"></i>
<i class="sw" style="left:71.8px;top:407.3px;background-color:#d1e78a"></i>
<i class="sw" style="left:88.2px;top:407.3px;background-color:#b9d464"></i>
<i class="sw" style="left:104.6px;top:407.3px;background-color:#96c885"></i>
<i class="sw" style="left:121px;top:407.3px;background-color:#ceffde"></i>
<i class="sw" style="left:137.4px;top:407.3px;background-color:#c7f3fc"></i>
<i class="sw" style="left:153.8px;top:407.3px;background-color:#b7c1ea"></i>
<i class="sw" style="left:170.2px;top:407.3px;background-color:#cfb9eb"></i>
<i class="sw" style="left:186.6px;top:407.3px;background-color:#af95f3"></i>
<i class="sw" style="left:203px;top:407.3px;background-color:#e6dbe1"></i>
<i class="sw" style="left:219.4px;top:407.3px;background-color:#a9a9a9"></i>
<i class="sw" style="left:6.2px;top:423.7px;background-color:#ce8f86"></i>
<i class="sw" style="left:22.6px;top:423.7px;background-color:#c0804a"></i>
<i class="sw" style="left:39px;top:423.7px;background-color:#9d8264"></i>
<i class="sw" style="left:55.4px;top:423.7px;background-color:#c2bc59"></i>
<i class="sw" style="left:71.8px;top:423.7px;background-color:#a7c400"></i>
<i class="sw" style="left:88.2px;top:423.7px;background-color:#78b63d"></i>
<i class="sw" style="left:104.6px;top:423.7px;background-color:#7fc6bc"></i>
<i class="sw" style="left:121px;top:423.7px;background-color:#97b4c9"></i>
<i class="sw" style="left:137.4px;top:423.7px;background-color:#7fa6ca"></i>
<i class="sw" style="left:153.8px;top:423.7px;background-color:#7f93d8"></i>
<i class="sw" style="left:170.2px;top:423.7px;background-color:#a793ba"></i>
<i class="sw" style="left:186.6px;top:423.7px;background-color:#c39cc2"></i>
<i class="sw" style="left:203px;top:423.7px;background-color:#c76b98"></i>
<i class="sw" style="left:219.4px;top:423.7px;background-color:#7b7b7b"></i>
<i class="sw" style="left:6.2px;top:440.1px;background-color:#c22b2b"></i>
<i class="sw" style="left:22.6px;top:440.1px;background-color:#b74c25"></i>
<i class="sw" style="left:39px;top:440.1px;background-color:#784d3c"></i>
<i class="sw" style="left:55.4px;top:440.1px;background-color:#e4c600"></i>
<i class="sw" style="left:71.8px;top:440.1px;background-color:#859a09"></i>
<i class="sw" style="left:88.2px;top:440.1px;background-color:#4aa721"></i>
<i class="sw" style="left:104.6px;top:440.1px;background-color:#00a695"></i>
<i class="sw" style="left:121px;top:440.1px;background-color:#18668f"></i>
<i class="sw" style="left:137.4px;top:440.1px;background-color:#142eab"></i>
<i class="sw" style="left:153.8px;top:440.1px;background-color:#2852b4"></i>
<i class="sw" style="left:170.2px;top:440.1px;background-color:#6347bf"></i>
<i class="sw" style="left:186.6px;top:440.1px;background-color:#ae43ba"></i>
<i class="sw" style="left:203px;top:440.1px;background-color:#e32270"></i>
<i class="sw" style="left:219.4px;top:440.1px;background-color:#3c3c3c"></i>
<div class="tab" style="left:3.8px;background:#FFCB0D;border-color:#FFCB0D"></div>
<div class="t " style="left:-68.91px;top:461.54px;font-size:11px;line-height:13px;letter-spacing:-0.02px;color:#1a1a1a;">Track</div>
<div class="tab" style="left:62.4px;border-color:#FFCB0D;--a:#FFCB0D"></div>
<div class="t tb" style="left:-10.03px;top:461.54px;font-size:11px;line-height:13px;letter-spacing:0.14px;color:#FFCB0D;">Arrange</div>
<div class="tab" style="left:121px;border-color:#FFCB0D;--a:#FFCB0D"></div>
<div class="t tb" style="left:48.32px;top:461.54px;font-size:11px;line-height:13px;letter-spacing:-0.36px;color:#FFCB0D;">Session</div>
<div class="tab" style="left:179.6px;border-color:#FFCB0D;--a:#FFCB0D"></div>
<div class="t tb" style="left:107.11px;top:461.54px;font-size:11px;line-height:13px;letter-spacing:0.03px;color:#FFCB0D;">Selected</div>
<div class="t " style="left:-40.25px;top:489.94px;font-size:11px;line-height:13px;letter-spacing:0px;">Track Colour To Clips</div>
<div class="t " style="left:-65px;top:514.34px;font-size:11px;line-height:13px;letter-spacing:0px;">Add Tracks</div>
<div class="pill" style="left:133px;top:489.5px;width:46px;height:15px;background:#a8a8a8;border-color:#333333"></div>
<div class="t " style="left:56.01px;top:491.04px;font-size:11px;line-height:13px;letter-spacing:0.03px;color:#000000;">Arrange</div>
<div class="pill" style="left:185.6px;top:489.5px;width:46px;height:15px;background:#a8a8a8;border-color:#333333"></div>
<div class="t " style="left:108.41px;top:491.04px;font-size:11px;line-height:13px;letter-spacing:-0.39px;color:#000000;">Session</div>
<div class="pill" style="left:79px;top:514px;width:46px;height:15px;background:#a8a8a8;border-color:#333333"></div>
<div class="t " style="left:1.96px;top:515.54px;font-size:11px;line-height:13px;letter-spacing:-0.07px;color:#000000;">MIDI</div>
<div class="pill" style="left:133px;top:514px;width:46px;height:15px;background:#a8a8a8;border-color:#333333"></div>
<div class="t " style="left:55.98px;top:515.54px;font-size:11px;line-height:13px;letter-spacing:-0.03px;color:#000000;">Audio</div>
<div class="pill" style="left:185.6px;top:514px;width:46px;height:15px;background:#a8a8a8;border-color:#333333"></div>
<div class="t " style="left:108.6px;top:515.54px;font-size:11px;line-height:13px;letter-spacing:0px;color:#000000;">Return</div>
<div style="position:absolute;left:0;top:535px;width:129px;height:24px;background:#505050"></div>
<div class="t " style="left:-36.31px;top:540.47px;font-size:11.5px;line-height:14px;letter-spacing:-0.01px;color:#222222;">No Clip Selected</div>
<div style="position:absolute;left:0;top:559px;width:129px;height:159px;background:#c2c2c2;border-bottom-left-radius:6px"></div>
<div style="position:absolute;left:129px;top:535px;width:3.6px;height:183px;background:#909090"></div>
<div style="position:absolute;left:132.6px;top:535px;width:104.4px;height:183px;background:#c2c2c2;border-bottom-right-radius:6px"></div>
<div class="t " style="left:-67.85px;top:567.14px;font-size:11px;line-height:13px;letter-spacing:-0.09px;">Clip Gain</div>
<div class="t " style="left:-6.4px;top:567.14px;font-size:11px;line-height:13px;letter-spacing:-0.19px;">Coarse</div>
<div class="t " style="left:-6.45px;top:610.14px;font-size:11px;line-height:13px;letter-spacing:0.09px;">0 st</div>
<div class="t " style="left:-6.15px;top:628.94px;font-size:11px;line-height:13px;letter-spacing:-0.3px;">Fine</div>
<div class="t " style="left:-6.2px;top:672.34px;font-size:11px;line-height:13px;">0</div>
<div style="position:absolute;left:10px;top:696.8px;width:53.5px;height:17px;background:#909090"></div>
<div class="t " style="left:-63.59px;top:699.36px;font-size:9.5px;line-height:11px;letter-spacing:-0.18px;color:#222222;">0 dB</div>
<div class="bx" style="left:69.5px;top:698.2px;width:52px;height:14.6px;background:#c8c8c8;border-color:#555555"></div>
<div class="t " style="left:-13.45px;top:699.04px;font-size:11px;line-height:13px;letter-spacing:0.09px;color:#000000;">Beats</div>
<div class="bx" style="left:135.2px;top:538.8px;width:13.8px;height:13.6px;background:#FFCB0D;border-color:#4a4a4a"></div>
<div class="t " style="left:85.63px;top:557.54px;font-size:11px;line-height:13px;letter-spacing:0.06px;font-weight:bold;">Selected</div>
<div class="t " style="left:86.13px;top:619.74px;font-size:11px;line-height:13px;letter-spacing:0.26px;font-weight:bold;">Parameter</div>
<div class="bx" style="left:149px;top:637px;width:74px;height:21.8px;background:#909090;border-color:#4a4a4a"></div>
<div class="t " style="left:85.81px;top:641.84px;font-size:11px;line-height:13px;letter-spacing:-0.19px;color:#111111;">Lock Param</div>
<div class="bx" style="left:149px;top:664px;width:74px;height:21.8px;background:#909090;border-color:#4a4a4a"></div>
<div class="t " style="left:85.85px;top:668.84px;font-size:11px;line-height:13px;letter-spacing:-0.11px;color:#111111;">Lock Clip</div>
<div class="bx" style="left:149px;top:691px;width:74px;height:21.8px;background:#909090;border-color:#4a4a4a"></div>
<div class="t " style="left:85.89px;top:695.84px;font-size:11px;line-height:13px;letter-spacing:-0.02px;color:#111111;">Lock Track</div>
<svg class="ov" width="237" height="720" viewBox="0 0 237 720">
<path d="M174.5 612.75A19.8 19.8 0 1 1 194.3 612.75M182.5 598.89L174.5 612.75" fill="none" stroke="#000000" stroke-width="2.6" stroke-linecap="round"/>
<path d="M35.5 645.8L47.2 640V651.7z" fill="#000000"/>
<path d="M111.2 702.3h7.6l-3.8 6z" fill="#000000"/>
<path d="M86.6 608.8A14.2 14.2 0 0 1 91.48 582.47" fill="none" stroke="#b8c8dc" stroke-width="1.6"/>
<path d="M95.92 582.47A14.2 14.2 0 0 1 100.8 608.8" fill="none" stroke="#777777" stroke-width="2.3"/>
<path d="M93.7 581.2V596.8" stroke="#777777" stroke-width="2.2"/>
<path d="M86.6 671.1A14.2 14.2 0 0 1 91.48 644.77" fill="none" stroke="#b8c8dc" stroke-width="1.6"/>
<path d="M95.92 644.77A14.2 14.2 0 0 1 100.8 671.1" fill="none" stroke="#777777" stroke-width="2.3"/>
<path d="M93.7 643.5V659.1" stroke="#777777" stroke-width="2.2"/>
<path d="M34.3 586.5V684.6" stroke="#000000" stroke-width="2.6"/>
</svg>
<div class="hl" style="box-shadow:inset 0 0 0 1px rgba(255,255,255,0.28)"></div>
</div>
</div>
</body></html>
